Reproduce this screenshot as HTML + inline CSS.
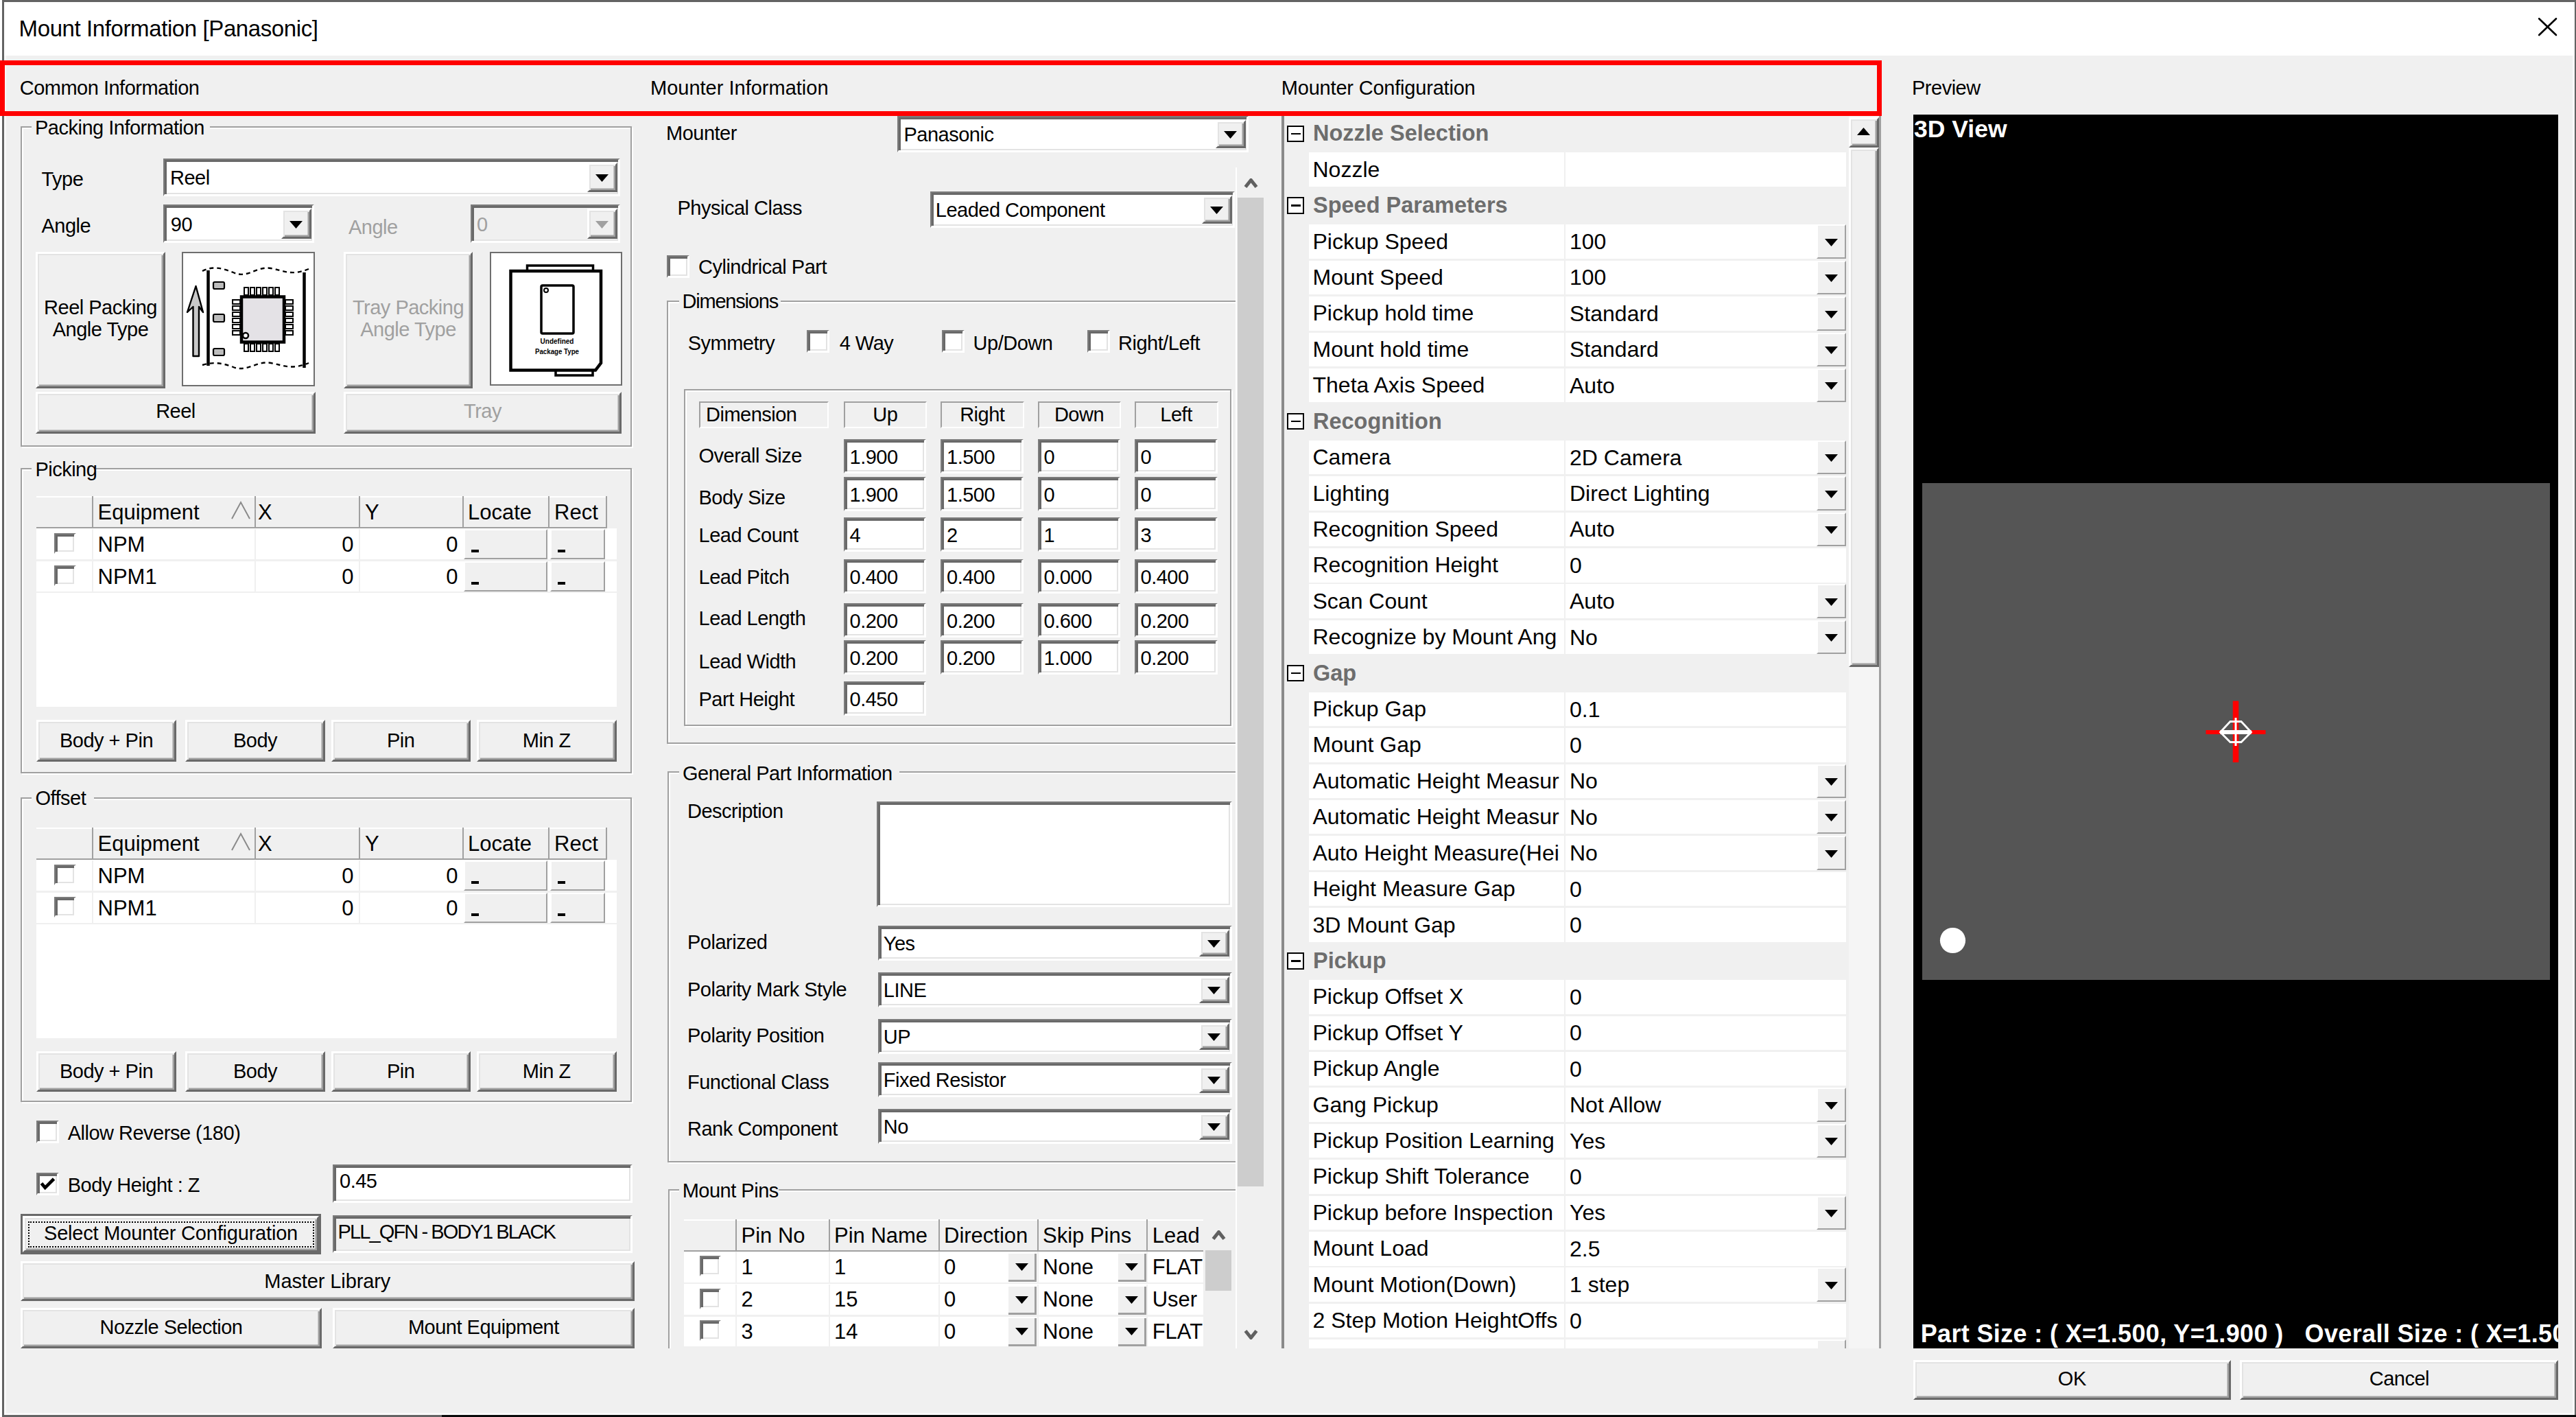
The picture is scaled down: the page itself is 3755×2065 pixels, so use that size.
<!DOCTYPE html><html><head><meta charset="utf-8"><title>Mount Information</title><style>*{margin:0;padding:0}
html,body{width:3755px;height:2065px;overflow:hidden;background:#f0f0f0;position:relative}
body div,body svg{position:absolute}
.t{white-space:nowrap;font-family:'Liberation Sans',sans-serif;color:#000}
.s{}
</style></head><body><div style="left:0px;top:0px;width:3755px;height:2065px;background:#f0f0f0"></div>
<div style="left:0px;top:0px;width:3px;height:2065px;background:#ffffff"></div>
<div style="left:3px;top:0px;width:3752px;height:2.5px;background:#636363"></div>
<div style="left:3px;top:0px;width:2.5px;height:2065px;background:#636363"></div>
<div style="left:3752.5px;top:0px;width:2.5px;height:2065px;background:#636363"></div>
<div style="left:3px;top:2062px;width:641px;height:3px;background:#636363"></div>
<div style="left:644px;top:2062px;width:3111px;height:3px;background:#0a0a0a"></div>
<div style="left:5.5px;top:81px;width:3.5px;height:1981px;background:#f9f9f9"></div>
<div style="left:5.5px;top:2059px;width:3747px;height:3px;background:#f9f9f9"></div>
<div style="left:3749.5px;top:81px;width:3px;height:1981px;background:#f9f9f9"></div>
<div style="left:5.5px;top:2.5px;width:3747px;height:78.5px;background:#ffffff"></div>
<div class="t" style="left:27.6px;top:24.75px;font-size:33px;line-height:33px;letter-spacing:-0.4px;">Mount Information [Panasonic]</div>
<svg style="left:3695px;top:22px" width="36" height="34" viewBox="0 0 36 34"><path d="M6.2,5.2 L31,29 M31,5.2 L6.2,29" stroke="#000" stroke-width="2.6" stroke-linecap="round"/></svg>
<div class="t s" style="left:28.7px;top:113.55px;font-size:29px;line-height:29px;letter-spacing:-0.5px;">Common Information</div>
<div class="t s" style="left:948px;top:114.35px;font-size:29px;line-height:29px;">Mounter Information</div>
<div class="t s" style="left:1867.8px;top:113.95px;font-size:29px;line-height:29px;letter-spacing:-0.2px;">Mounter Configuration</div>
<div class="t s" style="left:2787px;top:114.35px;font-size:29px;line-height:29px;letter-spacing:-0.5px;">Preview</div>
<div style="left:31.5px;top:186px;width:891.5px;height:467px;border:2px solid #fff;box-sizing:border-box"></div>
<div style="left:29.5px;top:184px;width:891.5px;height:467px;border:2px solid #a0a0a0;box-sizing:border-box"></div>
<div style="left:46px;top:172px;width:260px;height:20px;background:#f0f0f0"></div>
<div class="t s" style="left:51px;top:171.75px;font-size:29px;line-height:29px;letter-spacing:-0.5px;">Packing Information</div>
<div class="t s" style="left:60.5px;top:247.35px;font-size:29px;line-height:29px;letter-spacing:-0.5px;">Type</div>
<div style="left:238px;top:230.5px;width:666px;height:55.5px;background:#fff;border-style:solid;border-width:2px 3px 3px 2px;border-color:#7c7c7c #fff #fff #7c7c7c;box-sizing:border-box;box-shadow:inset 3px 3px 0 #696969, inset -2px -2px 0 #e3e3e3"></div>
<div style="left:855.5px;top:236.8px;width:44px;height:43.5px;background:#f0f0f0;border-style:solid;border-width:3px 3px 3px 3px;border-color:#fff #696969 #696969 #fff;box-sizing:border-box;box-shadow:inset 2px 2px 0 #e3e3e3, inset -2.5px -2.5px 0 #a0a0a0"></div>
<svg style="left:868px;top:254.05px" width="19" height="11" viewBox="0 0 19 11"><polygon points="0,0 19,0 9.5,11" fill="#000"/></svg>
<div class="t s" style="left:248px;top:245.35px;font-size:29px;line-height:29px;letter-spacing:-0.5px;">Reel</div>
<div class="t s" style="left:60.5px;top:315.15px;font-size:29px;line-height:29px;letter-spacing:-0.5px;">Angle</div>
<div style="left:238px;top:298px;width:220px;height:56px;background:#fff;border-style:solid;border-width:2px 3px 3px 2px;border-color:#7c7c7c #fff #fff #7c7c7c;box-sizing:border-box;box-shadow:inset 3px 3px 0 #696969, inset -2px -2px 0 #e3e3e3"></div>
<div style="left:409.5px;top:304.3px;width:44px;height:44px;background:#f0f0f0;border-style:solid;border-width:3px 3px 3px 3px;border-color:#fff #696969 #696969 #fff;box-sizing:border-box;box-shadow:inset 2px 2px 0 #e3e3e3, inset -2.5px -2.5px 0 #a0a0a0"></div>
<svg style="left:422px;top:321.8px" width="19" height="11" viewBox="0 0 19 11"><polygon points="0,0 19,0 9.5,11" fill="#000"/></svg>
<div class="t s" style="left:248.8px;top:313.35px;font-size:29px;line-height:29px;letter-spacing:-0.5px;">90</div>
<div class="t s" style="left:508px;top:317.05px;font-size:29px;line-height:29px;color:#a0a0a0;letter-spacing:-0.5px;">Angle</div>
<div style="left:686px;top:298px;width:218px;height:56px;background:#f0f0f0;border-style:solid;border-width:2px 3px 3px 2px;border-color:#7c7c7c #fff #fff #7c7c7c;box-sizing:border-box;box-shadow:inset 3px 3px 0 #696969, inset -2px -2px 0 #e3e3e3"></div>
<div style="left:855.5px;top:304.3px;width:44px;height:44px;background:#f0f0f0;border-style:solid;border-width:3px 3px 3px 3px;border-color:#fff #696969 #696969 #fff;box-sizing:border-box;box-shadow:inset 2px 2px 0 #e3e3e3, inset -2.5px -2.5px 0 #a0a0a0"></div>
<svg style="left:868px;top:321.8px" width="19" height="11" viewBox="0 0 19 11"><polygon points="0,0 19,0 9.5,11" fill="#a0a0a0"/></svg>
<div class="t s" style="left:695px;top:313.35px;font-size:29px;line-height:29px;color:#a0a0a0;letter-spacing:-0.5px;">0</div>
<div style="left:52px;top:367px;width:189px;height:198.5px;background:#f0f0f0;border-style:solid;border-width:3px 3px 3px 3px;border-color:#fff #696969 #696969 #fff;box-sizing:border-box;box-shadow:inset 2px 2px 0 #e3e3e3, inset -2.5px -2.5px 0 #a0a0a0"></div>
<div class="t s" style="left:52px;top:433.65px;font-size:29px;line-height:29px;letter-spacing:-0.5px;width:189px;text-align:center;">Reel Packing</div>
<div class="t s" style="left:52px;top:466.35px;font-size:29px;line-height:29px;letter-spacing:-0.5px;width:189px;text-align:center;">Angle Type</div>
<div style="left:265px;top:367px;width:194px;height:195.5px;background:#fff;border:2.5px solid #6e6e6e;box-sizing:border-box"></div>
<svg style="left:265px;top:367px" width="194" height="196" viewBox="0 0 194 196">
<g stroke="#000" fill="none">
<path d="M16.5,152 L16.5,80 L8,88 L20.5,50 L31,88 L25,80 L25,152 Z" fill="#c8c8c8" stroke-width="2.4" stroke-linejoin="round"/>
<path d="M38.5,27 L38.5,166" stroke-width="4.5"/>
<path d="M178.5,30 L178.5,169" stroke-width="4.5"/>
<path d="M30,28 C45,20 60,24 75,30 C95,40 110,20 130,24 C150,28 160,35 185,25" stroke-width="2.4" stroke-dasharray="6,5"/>
<path d="M30,165 C45,160 60,162 75,168 C95,176 110,158 130,162 C150,166 160,172 185,162" stroke-width="2.4" stroke-dasharray="6,5"/>
<rect x="46" y="44" width="16" height="10" rx="2" fill="#bdbdbd" stroke-width="2.2"/>
<rect x="46" y="91" width="16" height="11" rx="2" fill="#bdbdbd" stroke-width="2.2"/>
<rect x="46" y="141" width="16" height="10" rx="2" fill="#bdbdbd" stroke-width="2.2"/>
<rect x="87" y="65.5" width="62" height="66" fill="#e4e2e6" stroke-width="4.5"/>
</g>
<g fill="#fff" stroke="#000" stroke-width="2">
<rect x="91" y="52" width="6" height="11"/><rect x="100" y="52" width="6" height="11"/><rect x="109" y="52" width="6" height="11"/><rect x="118" y="52" width="6" height="11"/><rect x="127" y="52" width="6" height="11"/><rect x="136" y="52" width="6" height="11"/>
<rect x="91" y="134" width="6" height="11"/><rect x="100" y="134" width="6" height="11"/><rect x="109" y="134" width="6" height="11"/><rect x="118" y="134" width="6" height="11"/><rect x="127" y="134" width="6" height="11"/><rect x="136" y="134" width="6" height="11"/>
<rect x="74" y="70" width="11" height="6"/><rect x="74" y="79" width="11" height="6"/><rect x="74" y="88" width="11" height="6"/><rect x="74" y="97" width="11" height="6"/><rect x="74" y="106" width="11" height="6"/><rect x="74" y="115" width="11" height="6"/>
<rect x="151" y="70" width="11" height="6"/><rect x="151" y="79" width="11" height="6"/><rect x="151" y="88" width="11" height="6"/><rect x="151" y="97" width="11" height="6"/><rect x="151" y="106" width="11" height="6"/><rect x="151" y="115" width="11" height="6"/>
<circle cx="93" cy="122" r="4" stroke-width="2.5"/>
</g></svg>
<div style="left:501px;top:367px;width:188px;height:198.5px;background:#f0f0f0;border-style:solid;border-width:3px 3px 3px 3px;border-color:#fff #696969 #696969 #fff;box-sizing:border-box;box-shadow:inset 2px 2px 0 #e3e3e3, inset -2.5px -2.5px 0 #a0a0a0"></div>
<div class="t s" style="left:501px;top:433.65px;font-size:29px;line-height:29px;color:#a0a0a0;letter-spacing:-0.5px;width:188px;text-align:center;">Tray Packing</div>
<div class="t s" style="left:501px;top:466.35px;font-size:29px;line-height:29px;color:#a0a0a0;letter-spacing:-0.5px;width:188px;text-align:center;">Angle Type</div>
<div style="left:713.5px;top:367px;width:193px;height:195px;background:#fff;border:2.5px solid #6e6e6e;box-sizing:border-box"></div>
<svg style="left:713.5px;top:367px" width="193" height="195" viewBox="0 0 193 195">
<g stroke="#000" fill="#fff">
<rect x="54.5" y="20" width="96" height="8" stroke-width="3.5"/>
<rect x="96" y="172" width="54" height="8" stroke-width="3.5"/>
<path d="M30.5,28 L162,28 L162,162 L154,172.5 L30.5,172.5 Z" stroke-width="4.5"/>
<rect x="75" y="49" width="47" height="70" rx="2" stroke-width="3.5"/>
<circle cx="82" cy="56" r="3" stroke-width="2"/>
</g>
<text x="98" y="134" font-family="Liberation Sans" font-weight="bold" font-size="10" text-anchor="middle" fill="#000">Undefined</text>
<text x="98" y="149" font-family="Liberation Sans" font-weight="bold" font-size="10" text-anchor="middle" fill="#000" textLength="64" lengthAdjust="spacingAndGlyphs">Package Type</text>
</svg>
<div style="left:52px;top:571.3px;width:408px;height:60.4px;background:#f0f0f0;border-style:solid;border-width:3px 3px 3px 3px;border-color:#fff #696969 #696969 #fff;box-sizing:border-box;box-shadow:inset 2px 2px 0 #e3e3e3, inset -2.5px -2.5px 0 #a0a0a0"></div>
<div class="t s" style="left:52px;top:584.85px;font-size:29px;line-height:29px;letter-spacing:-0.5px;width:408px;text-align:center;">Reel</div>
<div style="left:501px;top:571.3px;width:405px;height:60.4px;background:#f0f0f0;border-style:solid;border-width:3px 3px 3px 3px;border-color:#fff #696969 #696969 #fff;box-sizing:border-box;box-shadow:inset 2px 2px 0 #e3e3e3, inset -2.5px -2.5px 0 #a0a0a0"></div>
<div class="t s" style="left:501px;top:584.85px;font-size:29px;line-height:29px;color:#a0a0a0;letter-spacing:-0.5px;width:405px;text-align:center;">Tray</div>
<div style="left:31.5px;top:683.5px;width:891.5px;height:445.5px;border:2px solid #fff;box-sizing:border-box"></div>
<div style="left:29.5px;top:681.5px;width:891.5px;height:445.5px;border:2px solid #a0a0a0;box-sizing:border-box"></div>
<div style="left:46.4px;top:669.5px;width:94px;height:20px;background:#f0f0f0"></div>
<div class="t s" style="left:51.4px;top:669.95px;font-size:29px;line-height:29px;letter-spacing:-0.5px;">Picking</div>
<div style="left:53px;top:770px;width:846px;height:259.5px;background:#fff"></div>
<div style="left:53px;top:723px;width:832px;height:47px;background:#f0f0f0"></div>
<div style="left:53px;top:723px;width:832px;height:2px;background:#ffffff"></div>
<div style="left:53px;top:767.5px;width:832px;height:2.5px;background:#a0a0a0"></div>
<div style="left:134px;top:723px;width:2px;height:47px;background:#a0a0a0"></div>
<div style="left:370.5px;top:723px;width:2px;height:47px;background:#a0a0a0"></div>
<div style="left:522.5px;top:723px;width:2px;height:47px;background:#a0a0a0"></div>
<div style="left:674px;top:723px;width:2px;height:47px;background:#a0a0a0"></div>
<div style="left:799px;top:723px;width:2px;height:47px;background:#a0a0a0"></div>
<div style="left:883px;top:723px;width:2px;height:47px;background:#a0a0a0"></div>
<div class="t" style="left:142.5px;top:730.65px;font-size:31px;line-height:31px;">Equipment</div>
<svg style="left:336px;top:729px" width="30" height="30" viewBox="0 0 30 30"><path d="M2,27 L15,3 L28,27" fill="none" stroke="#8a8a8a" stroke-width="2"/></svg>
<div class="t" style="left:376px;top:730.65px;font-size:31px;line-height:31px;">X</div>
<div class="t" style="left:532px;top:730.65px;font-size:31px;line-height:31px;">Y</div>
<div class="t" style="left:682px;top:730.65px;font-size:31px;line-height:31px;">Locate</div>
<div class="t" style="left:808px;top:730.65px;font-size:31px;line-height:31px;">Rect</div>
<div style="left:53px;top:815px;width:846px;height:2.5px;background:#f0f0f0"></div>
<div style="left:134px;top:771px;width:2px;height:44px;background:#f0f0f0"></div>
<div style="left:370.5px;top:771px;width:2px;height:44px;background:#f0f0f0"></div>
<div style="left:522.5px;top:771px;width:2px;height:44px;background:#f0f0f0"></div>
<div style="left:79px;top:777px;width:32px;height:30px;background:#fff;border-style:solid;border-width:2px 3px 3px 2px;border-color:#7c7c7c #fff #fff #7c7c7c;box-sizing:border-box;box-shadow:inset 3px 3px 0 #696969, inset -2px -2px 0 #e3e3e3"></div>
<div class="t" style="left:142.5px;top:777.65px;font-size:31px;line-height:31px;">NPM</div>
<div class="t" style="left:360px;top:777.65px;font-size:31px;line-height:31px;width:155.5px;text-align:right;">0</div>
<div class="t" style="left:512px;top:777.65px;font-size:31px;line-height:31px;width:155.5px;text-align:right;">0</div>
<div style="left:676.3px;top:771px;width:122.2px;height:44px;background:#f0f0f0;border-style:solid;border-width:2px 2.5px 2.5px 2px;border-color:#fff #a0a0a0 #a0a0a0 #fff;box-sizing:border-box"></div>
<div style="left:687.3px;top:801px;width:11px;height:4px;background:#000"></div>
<div style="left:802px;top:771px;width:80.4px;height:44px;background:#f0f0f0;border-style:solid;border-width:2px 2.5px 2.5px 2px;border-color:#fff #a0a0a0 #a0a0a0 #fff;box-sizing:border-box"></div>
<div style="left:813px;top:801px;width:11px;height:4px;background:#000"></div>
<div style="left:53px;top:861.5px;width:846px;height:2.5px;background:#f0f0f0"></div>
<div style="left:134px;top:818px;width:2px;height:43.5px;background:#f0f0f0"></div>
<div style="left:370.5px;top:818px;width:2px;height:43.5px;background:#f0f0f0"></div>
<div style="left:522.5px;top:818px;width:2px;height:43.5px;background:#f0f0f0"></div>
<div style="left:79px;top:824px;width:32px;height:30px;background:#fff;border-style:solid;border-width:2px 3px 3px 2px;border-color:#7c7c7c #fff #fff #7c7c7c;box-sizing:border-box;box-shadow:inset 3px 3px 0 #696969, inset -2px -2px 0 #e3e3e3"></div>
<div class="t" style="left:142.5px;top:824.65px;font-size:31px;line-height:31px;">NPM1</div>
<div class="t" style="left:360px;top:824.65px;font-size:31px;line-height:31px;width:155.5px;text-align:right;">0</div>
<div class="t" style="left:512px;top:824.65px;font-size:31px;line-height:31px;width:155.5px;text-align:right;">0</div>
<div style="left:676.3px;top:818px;width:122.2px;height:43.5px;background:#f0f0f0;border-style:solid;border-width:2px 2.5px 2.5px 2px;border-color:#fff #a0a0a0 #a0a0a0 #fff;box-sizing:border-box"></div>
<div style="left:687.3px;top:848px;width:11px;height:4px;background:#000"></div>
<div style="left:802px;top:818px;width:80.4px;height:43.5px;background:#f0f0f0;border-style:solid;border-width:2px 2.5px 2.5px 2px;border-color:#fff #a0a0a0 #a0a0a0 #fff;box-sizing:border-box"></div>
<div style="left:813px;top:848px;width:11px;height:4px;background:#000"></div>
<div style="left:53px;top:1049px;width:204px;height:61px;background:#f0f0f0;border-style:solid;border-width:3px 3px 3px 3px;border-color:#fff #696969 #696969 #fff;box-sizing:border-box;box-shadow:inset 2px 2px 0 #e3e3e3, inset -2.5px -2.5px 0 #a0a0a0"></div>
<div class="t s" style="left:53px;top:1064.65px;font-size:29px;line-height:29px;letter-spacing:-0.5px;width:204px;text-align:center;">Body + Pin</div>
<div style="left:270px;top:1049px;width:204px;height:61px;background:#f0f0f0;border-style:solid;border-width:3px 3px 3px 3px;border-color:#fff #696969 #696969 #fff;box-sizing:border-box;box-shadow:inset 2px 2px 0 #e3e3e3, inset -2.5px -2.5px 0 #a0a0a0"></div>
<div class="t s" style="left:270px;top:1064.65px;font-size:29px;line-height:29px;letter-spacing:-0.5px;width:204px;text-align:center;">Body</div>
<div style="left:482.5px;top:1049px;width:203.5px;height:61px;background:#f0f0f0;border-style:solid;border-width:3px 3px 3px 3px;border-color:#fff #696969 #696969 #fff;box-sizing:border-box;box-shadow:inset 2px 2px 0 #e3e3e3, inset -2.5px -2.5px 0 #a0a0a0"></div>
<div class="t s" style="left:482.5px;top:1064.65px;font-size:29px;line-height:29px;letter-spacing:-0.5px;width:203.5px;text-align:center;">Pin</div>
<div style="left:694.5px;top:1049px;width:204.5px;height:61px;background:#f0f0f0;border-style:solid;border-width:3px 3px 3px 3px;border-color:#fff #696969 #696969 #fff;box-sizing:border-box;box-shadow:inset 2px 2px 0 #e3e3e3, inset -2.5px -2.5px 0 #a0a0a0"></div>
<div class="t s" style="left:694.5px;top:1064.65px;font-size:29px;line-height:29px;letter-spacing:-0.5px;width:204.5px;text-align:center;">Min Z</div>
<div style="left:31.5px;top:1163.5px;width:891.5px;height:444.5px;border:2px solid #fff;box-sizing:border-box"></div>
<div style="left:29.5px;top:1161.5px;width:891.5px;height:444.5px;border:2px solid #a0a0a0;box-sizing:border-box"></div>
<div style="left:46.4px;top:1149.5px;width:91px;height:20px;background:#f0f0f0"></div>
<div class="t s" style="left:51.4px;top:1149.05px;font-size:29px;line-height:29px;letter-spacing:-0.5px;">Offset</div>
<div style="left:53px;top:1253px;width:846px;height:259.5px;background:#fff"></div>
<div style="left:53px;top:1206px;width:832px;height:47px;background:#f0f0f0"></div>
<div style="left:53px;top:1206px;width:832px;height:2px;background:#ffffff"></div>
<div style="left:53px;top:1250.5px;width:832px;height:2.5px;background:#a0a0a0"></div>
<div style="left:134px;top:1206px;width:2px;height:47px;background:#a0a0a0"></div>
<div style="left:370.5px;top:1206px;width:2px;height:47px;background:#a0a0a0"></div>
<div style="left:522.5px;top:1206px;width:2px;height:47px;background:#a0a0a0"></div>
<div style="left:674px;top:1206px;width:2px;height:47px;background:#a0a0a0"></div>
<div style="left:799px;top:1206px;width:2px;height:47px;background:#a0a0a0"></div>
<div style="left:883px;top:1206px;width:2px;height:47px;background:#a0a0a0"></div>
<div class="t" style="left:142.5px;top:1213.65px;font-size:31px;line-height:31px;">Equipment</div>
<svg style="left:336px;top:1212px" width="30" height="30" viewBox="0 0 30 30"><path d="M2,27 L15,3 L28,27" fill="none" stroke="#8a8a8a" stroke-width="2"/></svg>
<div class="t" style="left:376px;top:1213.65px;font-size:31px;line-height:31px;">X</div>
<div class="t" style="left:532px;top:1213.65px;font-size:31px;line-height:31px;">Y</div>
<div class="t" style="left:682px;top:1213.65px;font-size:31px;line-height:31px;">Locate</div>
<div class="t" style="left:808px;top:1213.65px;font-size:31px;line-height:31px;">Rect</div>
<div style="left:53px;top:1298px;width:846px;height:2.5px;background:#f0f0f0"></div>
<div style="left:134px;top:1254px;width:2px;height:44px;background:#f0f0f0"></div>
<div style="left:370.5px;top:1254px;width:2px;height:44px;background:#f0f0f0"></div>
<div style="left:522.5px;top:1254px;width:2px;height:44px;background:#f0f0f0"></div>
<div style="left:79px;top:1260px;width:32px;height:30px;background:#fff;border-style:solid;border-width:2px 3px 3px 2px;border-color:#7c7c7c #fff #fff #7c7c7c;box-sizing:border-box;box-shadow:inset 3px 3px 0 #696969, inset -2px -2px 0 #e3e3e3"></div>
<div class="t" style="left:142.5px;top:1260.65px;font-size:31px;line-height:31px;">NPM</div>
<div class="t" style="left:360px;top:1260.65px;font-size:31px;line-height:31px;width:155.5px;text-align:right;">0</div>
<div class="t" style="left:512px;top:1260.65px;font-size:31px;line-height:31px;width:155.5px;text-align:right;">0</div>
<div style="left:676.3px;top:1254px;width:122.2px;height:44px;background:#f0f0f0;border-style:solid;border-width:2px 2.5px 2.5px 2px;border-color:#fff #a0a0a0 #a0a0a0 #fff;box-sizing:border-box"></div>
<div style="left:687.3px;top:1284px;width:11px;height:4px;background:#000"></div>
<div style="left:802px;top:1254px;width:80.4px;height:44px;background:#f0f0f0;border-style:solid;border-width:2px 2.5px 2.5px 2px;border-color:#fff #a0a0a0 #a0a0a0 #fff;box-sizing:border-box"></div>
<div style="left:813px;top:1284px;width:11px;height:4px;background:#000"></div>
<div style="left:53px;top:1344.5px;width:846px;height:2.5px;background:#f0f0f0"></div>
<div style="left:134px;top:1301px;width:2px;height:43.5px;background:#f0f0f0"></div>
<div style="left:370.5px;top:1301px;width:2px;height:43.5px;background:#f0f0f0"></div>
<div style="left:522.5px;top:1301px;width:2px;height:43.5px;background:#f0f0f0"></div>
<div style="left:79px;top:1307px;width:32px;height:30px;background:#fff;border-style:solid;border-width:2px 3px 3px 2px;border-color:#7c7c7c #fff #fff #7c7c7c;box-sizing:border-box;box-shadow:inset 3px 3px 0 #696969, inset -2px -2px 0 #e3e3e3"></div>
<div class="t" style="left:142.5px;top:1307.65px;font-size:31px;line-height:31px;">NPM1</div>
<div class="t" style="left:360px;top:1307.65px;font-size:31px;line-height:31px;width:155.5px;text-align:right;">0</div>
<div class="t" style="left:512px;top:1307.65px;font-size:31px;line-height:31px;width:155.5px;text-align:right;">0</div>
<div style="left:676.3px;top:1301px;width:122.2px;height:43.5px;background:#f0f0f0;border-style:solid;border-width:2px 2.5px 2.5px 2px;border-color:#fff #a0a0a0 #a0a0a0 #fff;box-sizing:border-box"></div>
<div style="left:687.3px;top:1331px;width:11px;height:4px;background:#000"></div>
<div style="left:802px;top:1301px;width:80.4px;height:43.5px;background:#f0f0f0;border-style:solid;border-width:2px 2.5px 2.5px 2px;border-color:#fff #a0a0a0 #a0a0a0 #fff;box-sizing:border-box"></div>
<div style="left:813px;top:1331px;width:11px;height:4px;background:#000"></div>
<div style="left:53px;top:1531.7px;width:204px;height:59.7px;background:#f0f0f0;border-style:solid;border-width:3px 3px 3px 3px;border-color:#fff #696969 #696969 #fff;box-sizing:border-box;box-shadow:inset 2px 2px 0 #e3e3e3, inset -2.5px -2.5px 0 #a0a0a0"></div>
<div class="t s" style="left:53px;top:1547.35px;font-size:29px;line-height:29px;letter-spacing:-0.5px;width:204px;text-align:center;">Body + Pin</div>
<div style="left:270px;top:1531.7px;width:204px;height:59.7px;background:#f0f0f0;border-style:solid;border-width:3px 3px 3px 3px;border-color:#fff #696969 #696969 #fff;box-sizing:border-box;box-shadow:inset 2px 2px 0 #e3e3e3, inset -2.5px -2.5px 0 #a0a0a0"></div>
<div class="t s" style="left:270px;top:1547.35px;font-size:29px;line-height:29px;letter-spacing:-0.5px;width:204px;text-align:center;">Body</div>
<div style="left:482.5px;top:1531.7px;width:203.5px;height:59.7px;background:#f0f0f0;border-style:solid;border-width:3px 3px 3px 3px;border-color:#fff #696969 #696969 #fff;box-sizing:border-box;box-shadow:inset 2px 2px 0 #e3e3e3, inset -2.5px -2.5px 0 #a0a0a0"></div>
<div class="t s" style="left:482.5px;top:1547.35px;font-size:29px;line-height:29px;letter-spacing:-0.5px;width:203.5px;text-align:center;">Pin</div>
<div style="left:694.5px;top:1531.7px;width:204.5px;height:59.7px;background:#f0f0f0;border-style:solid;border-width:3px 3px 3px 3px;border-color:#fff #696969 #696969 #fff;box-sizing:border-box;box-shadow:inset 2px 2px 0 #e3e3e3, inset -2.5px -2.5px 0 #a0a0a0"></div>
<div class="t s" style="left:694.5px;top:1547.35px;font-size:29px;line-height:29px;letter-spacing:-0.5px;width:204.5px;text-align:center;">Min Z</div>
<div style="left:53px;top:1633px;width:33px;height:33px;background:#fff;border-style:solid;border-width:2px 3px 3px 2px;border-color:#7c7c7c #fff #fff #7c7c7c;box-sizing:border-box;box-shadow:inset 3px 3px 0 #696969, inset -2px -2px 0 #e3e3e3"></div>
<div class="t s" style="left:98.7px;top:1637.35px;font-size:29px;line-height:29px;letter-spacing:-0.5px;">Allow Reverse (180)</div>
<div style="left:53px;top:1709px;width:33px;height:33px;background:#fff;border-style:solid;border-width:2px 3px 3px 2px;border-color:#7c7c7c #fff #fff #7c7c7c;box-sizing:border-box;box-shadow:inset 3px 3px 0 #696969, inset -2px -2px 0 #e3e3e3"></div>
<svg style="left:53px;top:1709px" width="33" height="33" viewBox="0 0 31 30"><polyline points="7,14 12,20 24,8" fill="none" stroke="#000" stroke-width="4.5"/></svg>
<div class="t s" style="left:98.7px;top:1713.35px;font-size:29px;line-height:29px;letter-spacing:-0.5px;">Body Height : Z</div>
<div style="left:485px;top:1697px;width:437px;height:56px;background:#fff;border-style:solid;border-width:2px 3px 3px 2px;border-color:#7c7c7c #fff #fff #7c7c7c;box-sizing:border-box;box-shadow:inset 3px 3px 0 #696969, inset -2px -2px 0 #e3e3e3"></div>
<div class="t s" style="left:495px;top:1707.35px;font-size:29px;line-height:29px;letter-spacing:-0.5px;">0.45</div>
<div style="left:29.6px;top:1769px;width:438.4px;height:59.3px;border:3px solid #696969;box-sizing:border-box"></div>
<div style="left:32.6px;top:1772px;width:432.4px;height:53.3px;background:#f0f0f0;border-style:solid;border-width:3px 3px 3px 3px;border-color:#fff #696969 #696969 #fff;box-sizing:border-box;box-shadow:inset 2px 2px 0 #e3e3e3, inset -2.5px -2.5px 0 #a0a0a0"></div>
<div style="left:41px;top:1780.3px;width:417px;height:37.3px;border:2.2px dotted #000;box-sizing:border-box"></div>
<div class="t s" style="left:30px;top:1783.15px;font-size:29px;line-height:29px;letter-spacing:-0.2px;width:438px;text-align:center;">Select Mounter Configuration</div>
<div style="left:485px;top:1770.5px;width:437px;height:55.5px;background:#f0f0f0;border-style:solid;border-width:2px 3px 3px 2px;border-color:#7c7c7c #fff #fff #7c7c7c;box-sizing:border-box;box-shadow:inset 3px 3px 0 #696969, inset -2px -2px 0 #e3e3e3"></div>
<div class="t s" style="left:492.6px;top:1780.75px;font-size:29px;line-height:29px;letter-spacing:-1.9px;">PLL_QFN - BODY1 BLACK</div>
<div style="left:30px;top:1837.7px;width:894.6px;height:58.3px;background:#f0f0f0;border-style:solid;border-width:3px 3px 3px 3px;border-color:#fff #696969 #696969 #fff;box-sizing:border-box;box-shadow:inset 2px 2px 0 #e3e3e3, inset -2.5px -2.5px 0 #a0a0a0"></div>
<div class="t s" style="left:30px;top:1852.85px;font-size:29px;line-height:29px;letter-spacing:-0.1px;width:894.6px;text-align:center;">Master Library</div>
<div style="left:30px;top:1906px;width:439px;height:58.6px;background:#f0f0f0;border-style:solid;border-width:3px 3px 3px 3px;border-color:#fff #696969 #696969 #fff;box-sizing:border-box;box-shadow:inset 2px 2px 0 #e3e3e3, inset -2.5px -2.5px 0 #a0a0a0"></div>
<div class="t s" style="left:30px;top:1920.05px;font-size:29px;line-height:29px;letter-spacing:-0.5px;width:439px;text-align:center;">Nozzle Selection</div>
<div style="left:485px;top:1906px;width:439.6px;height:58.6px;background:#f0f0f0;border-style:solid;border-width:3px 3px 3px 3px;border-color:#fff #696969 #696969 #fff;box-sizing:border-box;box-shadow:inset 2px 2px 0 #e3e3e3, inset -2.5px -2.5px 0 #a0a0a0"></div>
<div class="t s" style="left:485px;top:1920.05px;font-size:29px;line-height:29px;letter-spacing:-0.5px;width:439.6px;text-align:center;">Mount Equipment</div>
<div class="t s" style="left:971px;top:179.95px;font-size:29px;line-height:29px;letter-spacing:-0.5px;">Mounter</div>
<div style="left:1308px;top:169px;width:512px;height:53px;background:#fff;border-style:solid;border-width:2px 3px 3px 2px;border-color:#7c7c7c #fff #fff #7c7c7c;box-sizing:border-box;box-shadow:inset 3px 3px 0 #696969, inset -2px -2px 0 #e3e3e3"></div>
<div style="left:1771.5px;top:175.3px;width:44px;height:41px;background:#f0f0f0;border-style:solid;border-width:3px 3px 3px 3px;border-color:#fff #696969 #696969 #fff;box-sizing:border-box;box-shadow:inset 2px 2px 0 #e3e3e3, inset -2.5px -2.5px 0 #a0a0a0"></div>
<svg style="left:1784px;top:191.3px" width="19" height="11" viewBox="0 0 19 11"><polygon points="0,0 19,0 9.5,11" fill="#000"/></svg>
<div class="t s" style="left:1317.5px;top:182.35px;font-size:29px;line-height:29px;letter-spacing:-0.5px;">Panasonic</div>
<div style="left:930px;top:243px;width:870.5px;height:1722px;overflow:hidden">
<div style="left:-930px;top:-243px;width:3755px;height:2065px">
<div class="t s" style="left:987.5px;top:289.35px;font-size:29px;line-height:29px;letter-spacing:-0.5px;">Physical Class</div>
<div style="left:1356px;top:279px;width:444px;height:53px;background:#fff;border-style:solid;border-width:2px 3px 3px 2px;border-color:#7c7c7c #fff #fff #7c7c7c;box-sizing:border-box;box-shadow:inset 3px 3px 0 #696969, inset -2px -2px 0 #e3e3e3"></div>
<div style="left:1751.5px;top:285.3px;width:44px;height:41px;background:#f0f0f0;border-style:solid;border-width:3px 3px 3px 3px;border-color:#fff #696969 #696969 #fff;box-sizing:border-box;box-shadow:inset 2px 2px 0 #e3e3e3, inset -2.5px -2.5px 0 #a0a0a0"></div>
<svg style="left:1764px;top:301.3px" width="19" height="11" viewBox="0 0 19 11"><polygon points="0,0 19,0 9.5,11" fill="#000"/></svg>
<div class="t s" style="left:1363.8px;top:292.15px;font-size:29px;line-height:29px;letter-spacing:-0.5px;">Leaded Component</div>
<div style="left:972.3px;top:372.3px;width:32.7px;height:33px;background:#fff;border-style:solid;border-width:2px 3px 3px 2px;border-color:#7c7c7c #fff #fff #7c7c7c;box-sizing:border-box;box-shadow:inset 3px 3px 0 #696969, inset -2px -2px 0 #e3e3e3"></div>
<div class="t s" style="left:1018px;top:375.35px;font-size:29px;line-height:29px;letter-spacing:-0.5px;">Cylindrical Part</div>
<div style="left:974.3px;top:439.5px;width:875.7px;height:646.5px;border:2px solid #fff;box-sizing:border-box"></div>
<div style="left:972.3px;top:437.5px;width:875.7px;height:646.5px;border:2px solid #a0a0a0;box-sizing:border-box"></div>
<div style="left:989.5px;top:425.5px;width:148px;height:20px;background:#f0f0f0"></div>
<div class="t s" style="left:994.5px;top:425.35px;font-size:29px;line-height:29px;letter-spacing:-1.2px;">Dimensions</div>
<div class="t s" style="left:1002.7px;top:486.35px;font-size:29px;line-height:29px;letter-spacing:-0.5px;">Symmetry</div>
<div style="left:1175.5px;top:481px;width:33px;height:33px;background:#fff;border-style:solid;border-width:2px 3px 3px 2px;border-color:#7c7c7c #fff #fff #7c7c7c;box-sizing:border-box;box-shadow:inset 3px 3px 0 #696969, inset -2px -2px 0 #e3e3e3"></div>
<div class="t s" style="left:1223.7px;top:486.35px;font-size:29px;line-height:29px;letter-spacing:-0.5px;">4 Way</div>
<div style="left:1372.5px;top:481px;width:33px;height:33px;background:#fff;border-style:solid;border-width:2px 3px 3px 2px;border-color:#7c7c7c #fff #fff #7c7c7c;box-sizing:border-box;box-shadow:inset 3px 3px 0 #696969, inset -2px -2px 0 #e3e3e3"></div>
<div class="t s" style="left:1418.6px;top:486.35px;font-size:29px;line-height:29px;letter-spacing:-0.5px;">Up/Down</div>
<div style="left:1584.5px;top:481px;width:33px;height:33px;background:#fff;border-style:solid;border-width:2px 3px 3px 2px;border-color:#7c7c7c #fff #fff #7c7c7c;box-sizing:border-box;box-shadow:inset 3px 3px 0 #696969, inset -2px -2px 0 #e3e3e3"></div>
<div class="t s" style="left:1630px;top:486.35px;font-size:29px;line-height:29px;letter-spacing:-0.5px;">Right/Left</div>
<div style="left:998.5px;top:568.5px;width:798px;height:491.5px;border:2px solid #fff;box-sizing:border-box"></div>
<div style="left:996.5px;top:566.5px;width:798px;height:491.5px;border:2px solid #a0a0a0;box-sizing:border-box"></div>
<div style="left:1019px;top:584.7px;width:188.5px;height:39.3px;border-style:solid;border-width:2.5px 2px 2px 2.5px;border-color:#a0a0a0 #fff #fff #a0a0a0;box-sizing:border-box"></div>
<div class="t s" style="left:1029px;top:590.35px;font-size:29px;line-height:29px;letter-spacing:-0.5px;">Dimension</div>
<div style="left:1229.5px;top:584.7px;width:121.5px;height:39.3px;border-style:solid;border-width:2.5px 2px 2px 2.5px;border-color:#a0a0a0 #fff #fff #a0a0a0;box-sizing:border-box"></div>
<div class="t s" style="left:1229.5px;top:590.35px;font-size:29px;line-height:29px;letter-spacing:-0.5px;width:121.5px;text-align:center;">Up</div>
<div style="left:1371px;top:584.7px;width:121.5px;height:39.3px;border-style:solid;border-width:2.5px 2px 2px 2.5px;border-color:#a0a0a0 #fff #fff #a0a0a0;box-sizing:border-box"></div>
<div class="t s" style="left:1371px;top:590.35px;font-size:29px;line-height:29px;letter-spacing:-0.5px;width:121.5px;text-align:center;">Right</div>
<div style="left:1512.5px;top:584.7px;width:121px;height:39.3px;border-style:solid;border-width:2.5px 2px 2px 2.5px;border-color:#a0a0a0 #fff #fff #a0a0a0;box-sizing:border-box"></div>
<div class="t s" style="left:1512.5px;top:590.35px;font-size:29px;line-height:29px;letter-spacing:-0.5px;width:121px;text-align:center;">Down</div>
<div style="left:1653.5px;top:584.7px;width:122px;height:39.3px;border-style:solid;border-width:2.5px 2px 2px 2.5px;border-color:#a0a0a0 #fff #fff #a0a0a0;box-sizing:border-box"></div>
<div class="t s" style="left:1653.5px;top:590.35px;font-size:29px;line-height:29px;letter-spacing:-0.5px;width:122px;text-align:center;">Left</div>
<div class="t s" style="left:1018.5px;top:649.75px;font-size:29px;line-height:29px;letter-spacing:-0.5px;">Overall Size</div>
<div style="left:1229.5px;top:639.5px;width:120.5px;height:50px;background:#fff;border-style:solid;border-width:2px 3px 3px 2px;border-color:#7c7c7c #fff #fff #7c7c7c;box-sizing:border-box;box-shadow:inset 3px 3px 0 #696969, inset -2px -2px 0 #e3e3e3"></div>
<div class="t s" style="left:1238.5px;top:651.85px;font-size:29px;line-height:29px;letter-spacing:-0.5px;">1.900</div>
<div style="left:1371px;top:639.5px;width:120.5px;height:50px;background:#fff;border-style:solid;border-width:2px 3px 3px 2px;border-color:#7c7c7c #fff #fff #7c7c7c;box-sizing:border-box;box-shadow:inset 3px 3px 0 #696969, inset -2px -2px 0 #e3e3e3"></div>
<div class="t s" style="left:1380px;top:651.85px;font-size:29px;line-height:29px;letter-spacing:-0.5px;">1.500</div>
<div style="left:1512.5px;top:639.5px;width:120px;height:50px;background:#fff;border-style:solid;border-width:2px 3px 3px 2px;border-color:#7c7c7c #fff #fff #7c7c7c;box-sizing:border-box;box-shadow:inset 3px 3px 0 #696969, inset -2px -2px 0 #e3e3e3"></div>
<div class="t s" style="left:1521.5px;top:651.85px;font-size:29px;line-height:29px;letter-spacing:-0.5px;">0</div>
<div style="left:1653.5px;top:639.5px;width:121px;height:50px;background:#fff;border-style:solid;border-width:2px 3px 3px 2px;border-color:#7c7c7c #fff #fff #7c7c7c;box-sizing:border-box;box-shadow:inset 3px 3px 0 #696969, inset -2px -2px 0 #e3e3e3"></div>
<div class="t s" style="left:1662.5px;top:651.85px;font-size:29px;line-height:29px;letter-spacing:-0.5px;">0</div>
<div class="t s" style="left:1018.5px;top:710.95px;font-size:29px;line-height:29px;letter-spacing:-0.5px;">Body Size</div>
<div style="left:1229.5px;top:694.5px;width:120.5px;height:50px;background:#fff;border-style:solid;border-width:2px 3px 3px 2px;border-color:#7c7c7c #fff #fff #7c7c7c;box-sizing:border-box;box-shadow:inset 3px 3px 0 #696969, inset -2px -2px 0 #e3e3e3"></div>
<div class="t s" style="left:1238.5px;top:706.85px;font-size:29px;line-height:29px;letter-spacing:-0.5px;">1.900</div>
<div style="left:1371px;top:694.5px;width:120.5px;height:50px;background:#fff;border-style:solid;border-width:2px 3px 3px 2px;border-color:#7c7c7c #fff #fff #7c7c7c;box-sizing:border-box;box-shadow:inset 3px 3px 0 #696969, inset -2px -2px 0 #e3e3e3"></div>
<div class="t s" style="left:1380px;top:706.85px;font-size:29px;line-height:29px;letter-spacing:-0.5px;">1.500</div>
<div style="left:1512.5px;top:694.5px;width:120px;height:50px;background:#fff;border-style:solid;border-width:2px 3px 3px 2px;border-color:#7c7c7c #fff #fff #7c7c7c;box-sizing:border-box;box-shadow:inset 3px 3px 0 #696969, inset -2px -2px 0 #e3e3e3"></div>
<div class="t s" style="left:1521.5px;top:706.85px;font-size:29px;line-height:29px;letter-spacing:-0.5px;">0</div>
<div style="left:1653.5px;top:694.5px;width:121px;height:50px;background:#fff;border-style:solid;border-width:2px 3px 3px 2px;border-color:#7c7c7c #fff #fff #7c7c7c;box-sizing:border-box;box-shadow:inset 3px 3px 0 #696969, inset -2px -2px 0 #e3e3e3"></div>
<div class="t s" style="left:1662.5px;top:706.85px;font-size:29px;line-height:29px;letter-spacing:-0.5px;">0</div>
<div class="t s" style="left:1018.5px;top:766.35px;font-size:29px;line-height:29px;letter-spacing:-0.5px;">Lead Count</div>
<div style="left:1229.5px;top:753.5px;width:120.5px;height:50px;background:#fff;border-style:solid;border-width:2px 3px 3px 2px;border-color:#7c7c7c #fff #fff #7c7c7c;box-sizing:border-box;box-shadow:inset 3px 3px 0 #696969, inset -2px -2px 0 #e3e3e3"></div>
<div class="t s" style="left:1238.5px;top:765.85px;font-size:29px;line-height:29px;letter-spacing:-0.5px;">4</div>
<div style="left:1371px;top:753.5px;width:120.5px;height:50px;background:#fff;border-style:solid;border-width:2px 3px 3px 2px;border-color:#7c7c7c #fff #fff #7c7c7c;box-sizing:border-box;box-shadow:inset 3px 3px 0 #696969, inset -2px -2px 0 #e3e3e3"></div>
<div class="t s" style="left:1380px;top:765.85px;font-size:29px;line-height:29px;letter-spacing:-0.5px;">2</div>
<div style="left:1512.5px;top:753.5px;width:120px;height:50px;background:#fff;border-style:solid;border-width:2px 3px 3px 2px;border-color:#7c7c7c #fff #fff #7c7c7c;box-sizing:border-box;box-shadow:inset 3px 3px 0 #696969, inset -2px -2px 0 #e3e3e3"></div>
<div class="t s" style="left:1521.5px;top:765.85px;font-size:29px;line-height:29px;letter-spacing:-0.5px;">1</div>
<div style="left:1653.5px;top:753.5px;width:121px;height:50px;background:#fff;border-style:solid;border-width:2px 3px 3px 2px;border-color:#7c7c7c #fff #fff #7c7c7c;box-sizing:border-box;box-shadow:inset 3px 3px 0 #696969, inset -2px -2px 0 #e3e3e3"></div>
<div class="t s" style="left:1662.5px;top:765.85px;font-size:29px;line-height:29px;letter-spacing:-0.5px;">3</div>
<div class="t s" style="left:1018.5px;top:827.35px;font-size:29px;line-height:29px;letter-spacing:-0.5px;">Lead Pitch</div>
<div style="left:1229.5px;top:815px;width:120.5px;height:50px;background:#fff;border-style:solid;border-width:2px 3px 3px 2px;border-color:#7c7c7c #fff #fff #7c7c7c;box-sizing:border-box;box-shadow:inset 3px 3px 0 #696969, inset -2px -2px 0 #e3e3e3"></div>
<div class="t s" style="left:1238.5px;top:827.35px;font-size:29px;line-height:29px;letter-spacing:-0.5px;">0.400</div>
<div style="left:1371px;top:815px;width:120.5px;height:50px;background:#fff;border-style:solid;border-width:2px 3px 3px 2px;border-color:#7c7c7c #fff #fff #7c7c7c;box-sizing:border-box;box-shadow:inset 3px 3px 0 #696969, inset -2px -2px 0 #e3e3e3"></div>
<div class="t s" style="left:1380px;top:827.35px;font-size:29px;line-height:29px;letter-spacing:-0.5px;">0.400</div>
<div style="left:1512.5px;top:815px;width:120px;height:50px;background:#fff;border-style:solid;border-width:2px 3px 3px 2px;border-color:#7c7c7c #fff #fff #7c7c7c;box-sizing:border-box;box-shadow:inset 3px 3px 0 #696969, inset -2px -2px 0 #e3e3e3"></div>
<div class="t s" style="left:1521.5px;top:827.35px;font-size:29px;line-height:29px;letter-spacing:-0.5px;">0.000</div>
<div style="left:1653.5px;top:815px;width:121px;height:50px;background:#fff;border-style:solid;border-width:2px 3px 3px 2px;border-color:#7c7c7c #fff #fff #7c7c7c;box-sizing:border-box;box-shadow:inset 3px 3px 0 #696969, inset -2px -2px 0 #e3e3e3"></div>
<div class="t s" style="left:1662.5px;top:827.35px;font-size:29px;line-height:29px;letter-spacing:-0.5px;">0.400</div>
<div class="t s" style="left:1018.5px;top:886.85px;font-size:29px;line-height:29px;letter-spacing:-0.5px;">Lead Length</div>
<div style="left:1229.5px;top:878.5px;width:120.5px;height:50px;background:#fff;border-style:solid;border-width:2px 3px 3px 2px;border-color:#7c7c7c #fff #fff #7c7c7c;box-sizing:border-box;box-shadow:inset 3px 3px 0 #696969, inset -2px -2px 0 #e3e3e3"></div>
<div class="t s" style="left:1238.5px;top:890.85px;font-size:29px;line-height:29px;letter-spacing:-0.5px;">0.200</div>
<div style="left:1371px;top:878.5px;width:120.5px;height:50px;background:#fff;border-style:solid;border-width:2px 3px 3px 2px;border-color:#7c7c7c #fff #fff #7c7c7c;box-sizing:border-box;box-shadow:inset 3px 3px 0 #696969, inset -2px -2px 0 #e3e3e3"></div>
<div class="t s" style="left:1380px;top:890.85px;font-size:29px;line-height:29px;letter-spacing:-0.5px;">0.200</div>
<div style="left:1512.5px;top:878.5px;width:120px;height:50px;background:#fff;border-style:solid;border-width:2px 3px 3px 2px;border-color:#7c7c7c #fff #fff #7c7c7c;box-sizing:border-box;box-shadow:inset 3px 3px 0 #696969, inset -2px -2px 0 #e3e3e3"></div>
<div class="t s" style="left:1521.5px;top:890.85px;font-size:29px;line-height:29px;letter-spacing:-0.5px;">0.600</div>
<div style="left:1653.5px;top:878.5px;width:121px;height:50px;background:#fff;border-style:solid;border-width:2px 3px 3px 2px;border-color:#7c7c7c #fff #fff #7c7c7c;box-sizing:border-box;box-shadow:inset 3px 3px 0 #696969, inset -2px -2px 0 #e3e3e3"></div>
<div class="t s" style="left:1662.5px;top:890.85px;font-size:29px;line-height:29px;letter-spacing:-0.5px;">0.200</div>
<div class="t s" style="left:1018.5px;top:950.05px;font-size:29px;line-height:29px;letter-spacing:-0.5px;">Lead Width</div>
<div style="left:1229.5px;top:933px;width:120.5px;height:50px;background:#fff;border-style:solid;border-width:2px 3px 3px 2px;border-color:#7c7c7c #fff #fff #7c7c7c;box-sizing:border-box;box-shadow:inset 3px 3px 0 #696969, inset -2px -2px 0 #e3e3e3"></div>
<div class="t s" style="left:1238.5px;top:945.35px;font-size:29px;line-height:29px;letter-spacing:-0.5px;">0.200</div>
<div style="left:1371px;top:933px;width:120.5px;height:50px;background:#fff;border-style:solid;border-width:2px 3px 3px 2px;border-color:#7c7c7c #fff #fff #7c7c7c;box-sizing:border-box;box-shadow:inset 3px 3px 0 #696969, inset -2px -2px 0 #e3e3e3"></div>
<div class="t s" style="left:1380px;top:945.35px;font-size:29px;line-height:29px;letter-spacing:-0.5px;">0.200</div>
<div style="left:1512.5px;top:933px;width:120px;height:50px;background:#fff;border-style:solid;border-width:2px 3px 3px 2px;border-color:#7c7c7c #fff #fff #7c7c7c;box-sizing:border-box;box-shadow:inset 3px 3px 0 #696969, inset -2px -2px 0 #e3e3e3"></div>
<div class="t s" style="left:1521.5px;top:945.35px;font-size:29px;line-height:29px;letter-spacing:-0.5px;">1.000</div>
<div style="left:1653.5px;top:933px;width:121px;height:50px;background:#fff;border-style:solid;border-width:2px 3px 3px 2px;border-color:#7c7c7c #fff #fff #7c7c7c;box-sizing:border-box;box-shadow:inset 3px 3px 0 #696969, inset -2px -2px 0 #e3e3e3"></div>
<div class="t s" style="left:1662.5px;top:945.35px;font-size:29px;line-height:29px;letter-spacing:-0.5px;">0.200</div>
<div class="t s" style="left:1018.5px;top:1005.35px;font-size:29px;line-height:29px;letter-spacing:-0.5px;">Part Height</div>
<div style="left:1229.5px;top:993px;width:120.5px;height:50px;background:#fff;border-style:solid;border-width:2px 3px 3px 2px;border-color:#7c7c7c #fff #fff #7c7c7c;box-sizing:border-box;box-shadow:inset 3px 3px 0 #696969, inset -2px -2px 0 #e3e3e3"></div>
<div class="t s" style="left:1238.5px;top:1005.35px;font-size:29px;line-height:29px;letter-spacing:-0.5px;">0.450</div>
<div style="left:975px;top:1126px;width:875px;height:570px;border:2px solid #fff;box-sizing:border-box"></div>
<div style="left:973px;top:1124px;width:875px;height:570px;border:2px solid #a0a0a0;box-sizing:border-box"></div>
<div style="left:990px;top:1112px;width:321px;height:20px;background:#f0f0f0"></div>
<div class="t s" style="left:995px;top:1113.35px;font-size:29px;line-height:29px;letter-spacing:-0.5px;">General Part Information</div>
<div class="t s" style="left:1002px;top:1168.35px;font-size:29px;line-height:29px;letter-spacing:-0.5px;">Description</div>
<div style="left:1278px;top:1168px;width:518px;height:154px;background:#fff;border-style:solid;border-width:2px 3px 3px 2px;border-color:#7c7c7c #fff #fff #7c7c7c;box-sizing:border-box;box-shadow:inset 3px 3px 0 #696969, inset -2px -2px 0 #e3e3e3"></div>
<div class="t s" style="left:1002px;top:1359.35px;font-size:29px;line-height:29px;letter-spacing:-0.5px;">Polarized</div>
<div style="left:1280px;top:1349px;width:516px;height:51px;background:#fff;border-style:solid;border-width:2px 3px 3px 2px;border-color:#7c7c7c #fff #fff #7c7c7c;box-sizing:border-box;box-shadow:inset 3px 3px 0 #696969, inset -2px -2px 0 #e3e3e3"></div>
<div style="left:1747.5px;top:1355.3px;width:44px;height:39px;background:#f0f0f0;border-style:solid;border-width:3px 3px 3px 3px;border-color:#fff #696969 #696969 #fff;box-sizing:border-box;box-shadow:inset 2px 2px 0 #e3e3e3, inset -2.5px -2.5px 0 #a0a0a0"></div>
<svg style="left:1760px;top:1370.3px" width="19" height="11" viewBox="0 0 19 11"><polygon points="0,0 19,0 9.5,11" fill="#000"/></svg>
<div class="t s" style="left:1287.8px;top:1361.35px;font-size:29px;line-height:29px;letter-spacing:-0.5px;">Yes</div>
<div class="t s" style="left:1002px;top:1428.05px;font-size:29px;line-height:29px;letter-spacing:-0.5px;">Polarity Mark Style</div>
<div style="left:1280px;top:1417px;width:516px;height:51px;background:#fff;border-style:solid;border-width:2px 3px 3px 2px;border-color:#7c7c7c #fff #fff #7c7c7c;box-sizing:border-box;box-shadow:inset 3px 3px 0 #696969, inset -2px -2px 0 #e3e3e3"></div>
<div style="left:1747.5px;top:1423.3px;width:44px;height:39px;background:#f0f0f0;border-style:solid;border-width:3px 3px 3px 3px;border-color:#fff #696969 #696969 #fff;box-sizing:border-box;box-shadow:inset 2px 2px 0 #e3e3e3, inset -2.5px -2.5px 0 #a0a0a0"></div>
<svg style="left:1760px;top:1438.3px" width="19" height="11" viewBox="0 0 19 11"><polygon points="0,0 19,0 9.5,11" fill="#000"/></svg>
<div class="t s" style="left:1287.8px;top:1429.35px;font-size:29px;line-height:29px;letter-spacing:-0.5px;">LINE</div>
<div class="t s" style="left:1002px;top:1495.35px;font-size:29px;line-height:29px;letter-spacing:-0.5px;">Polarity Position</div>
<div style="left:1280px;top:1484.5px;width:516px;height:51px;background:#fff;border-style:solid;border-width:2px 3px 3px 2px;border-color:#7c7c7c #fff #fff #7c7c7c;box-sizing:border-box;box-shadow:inset 3px 3px 0 #696969, inset -2px -2px 0 #e3e3e3"></div>
<div style="left:1747.5px;top:1490.8px;width:44px;height:39px;background:#f0f0f0;border-style:solid;border-width:3px 3px 3px 3px;border-color:#fff #696969 #696969 #fff;box-sizing:border-box;box-shadow:inset 2px 2px 0 #e3e3e3, inset -2.5px -2.5px 0 #a0a0a0"></div>
<svg style="left:1760px;top:1505.8px" width="19" height="11" viewBox="0 0 19 11"><polygon points="0,0 19,0 9.5,11" fill="#000"/></svg>
<div class="t s" style="left:1287.8px;top:1496.85px;font-size:29px;line-height:29px;letter-spacing:-0.5px;">UP</div>
<div class="t s" style="left:1002px;top:1563.35px;font-size:29px;line-height:29px;letter-spacing:-0.5px;">Functional Class</div>
<div style="left:1280px;top:1548px;width:516px;height:51px;background:#fff;border-style:solid;border-width:2px 3px 3px 2px;border-color:#7c7c7c #fff #fff #7c7c7c;box-sizing:border-box;box-shadow:inset 3px 3px 0 #696969, inset -2px -2px 0 #e3e3e3"></div>
<div style="left:1747.5px;top:1554.3px;width:44px;height:39px;background:#f0f0f0;border-style:solid;border-width:3px 3px 3px 3px;border-color:#fff #696969 #696969 #fff;box-sizing:border-box;box-shadow:inset 2px 2px 0 #e3e3e3, inset -2.5px -2.5px 0 #a0a0a0"></div>
<svg style="left:1760px;top:1569.3px" width="19" height="11" viewBox="0 0 19 11"><polygon points="0,0 19,0 9.5,11" fill="#000"/></svg>
<div class="t s" style="left:1287.8px;top:1560.35px;font-size:29px;line-height:29px;letter-spacing:-0.5px;">Fixed Resistor</div>
<div class="t s" style="left:1002px;top:1631.35px;font-size:29px;line-height:29px;letter-spacing:-0.5px;">Rank Component</div>
<div style="left:1280px;top:1615.5px;width:516px;height:51px;background:#fff;border-style:solid;border-width:2px 3px 3px 2px;border-color:#7c7c7c #fff #fff #7c7c7c;box-sizing:border-box;box-shadow:inset 3px 3px 0 #696969, inset -2px -2px 0 #e3e3e3"></div>
<div style="left:1747.5px;top:1621.8px;width:44px;height:39px;background:#f0f0f0;border-style:solid;border-width:3px 3px 3px 3px;border-color:#fff #696969 #696969 #fff;box-sizing:border-box;box-shadow:inset 2px 2px 0 #e3e3e3, inset -2.5px -2.5px 0 #a0a0a0"></div>
<svg style="left:1760px;top:1636.8px" width="19" height="11" viewBox="0 0 19 11"><polygon points="0,0 19,0 9.5,11" fill="#000"/></svg>
<div class="t s" style="left:1287.8px;top:1627.85px;font-size:29px;line-height:29px;letter-spacing:-0.5px;">No</div>
<div style="left:975.6px;top:1734.5px;width:874.4px;height:365.5px;border:2px solid #fff;box-sizing:border-box"></div>
<div style="left:973.6px;top:1732.5px;width:874.4px;height:365.5px;border:2px solid #a0a0a0;box-sizing:border-box"></div>
<div style="left:989.7px;top:1720.5px;width:145px;height:20px;background:#f0f0f0"></div>
<div class="t s" style="left:994.7px;top:1721.05px;font-size:29px;line-height:29px;letter-spacing:-0.5px;">Mount Pins</div>
<div style="left:996.6px;top:1776.5px;width:757.1px;height:47.5px;background:#f0f0f0"></div>
<div style="left:996.6px;top:1776.5px;width:757.1px;height:2px;background:#fff"></div>
<div style="left:996.6px;top:1821.7px;width:757.1px;height:2.4px;background:#a0a0a0"></div>
<div style="left:1072px;top:1776.5px;width:2px;height:47.5px;background:#a0a0a0"></div>
<div style="left:1208px;top:1776.5px;width:2px;height:47.5px;background:#a0a0a0"></div>
<div style="left:1368px;top:1776.5px;width:2px;height:47.5px;background:#a0a0a0"></div>
<div style="left:1512px;top:1776.5px;width:2px;height:47.5px;background:#a0a0a0"></div>
<div style="left:1671px;top:1776.5px;width:2px;height:47.5px;background:#a0a0a0"></div>
<div class="t" style="left:1080.5px;top:1784.95px;font-size:31px;line-height:31px;">Pin No</div>
<div class="t" style="left:1216px;top:1784.95px;font-size:31px;line-height:31px;">Pin Name</div>
<div class="t" style="left:1376px;top:1784.95px;font-size:31px;line-height:31px;">Direction</div>
<div class="t" style="left:1520px;top:1784.95px;font-size:31px;line-height:31px;">Skip Pins</div>
<div class="t" style="left:1679.7px;top:1784.95px;font-size:31px;line-height:31px;">Lead</div>
<div style="left:996.6px;top:1824px;width:757.1px;height:141px;background:#fff"></div>
<div style="left:996.6px;top:1868.5px;width:757.1px;height:2.5px;background:#f0f0f0"></div>
<div style="left:1072px;top:1824px;width:2px;height:44.5px;background:#f0f0f0"></div>
<div style="left:1208px;top:1824px;width:2px;height:44.5px;background:#f0f0f0"></div>
<div style="left:1368px;top:1824px;width:2px;height:44.5px;background:#f0f0f0"></div>
<div style="left:1512px;top:1824px;width:2px;height:44.5px;background:#f0f0f0"></div>
<div style="left:1671px;top:1824px;width:2px;height:44.5px;background:#f0f0f0"></div>
<div style="left:1019.5px;top:1830px;width:31.5px;height:30px;background:#fff;border-style:solid;border-width:2px 3px 3px 2px;border-color:#7c7c7c #fff #fff #7c7c7c;box-sizing:border-box;box-shadow:inset 3px 3px 0 #696969, inset -2px -2px 0 #e3e3e3"></div>
<div class="t" style="left:1080.5px;top:1830.65px;font-size:31px;line-height:31px;">1</div>
<div class="t" style="left:1216px;top:1830.65px;font-size:31px;line-height:31px;">1</div>
<div class="t" style="left:1376px;top:1830.65px;font-size:31px;line-height:31px;">0</div>
<div style="left:1470.4px;top:1827px;width:41px;height:41px;background:#f0f0f0;border-style:solid;border-width:0 3px 3px 0;border-color:#a0a0a0;box-sizing:border-box"></div>
<svg style="left:1480px;top:1841px" width="19" height="11" viewBox="0 0 19 11"><polygon points="0,0 19,0 9.5,11" fill="#000"/></svg>
<div class="t" style="left:1520px;top:1830.65px;font-size:31px;line-height:31px;">None</div>
<div style="left:1630px;top:1827px;width:41px;height:41px;background:#f0f0f0;border-style:solid;border-width:0 3px 3px 0;border-color:#a0a0a0;box-sizing:border-box"></div>
<svg style="left:1640px;top:1841px" width="19" height="11" viewBox="0 0 19 11"><polygon points="0,0 19,0 9.5,11" fill="#000"/></svg>
<div class="t" style="left:1679.7px;top:1830.65px;font-size:31px;line-height:31px;">FLAT</div>
<div style="left:996.6px;top:1916.1px;width:757.1px;height:2.5px;background:#f0f0f0"></div>
<div style="left:1072px;top:1871.6px;width:2px;height:44.5px;background:#f0f0f0"></div>
<div style="left:1208px;top:1871.6px;width:2px;height:44.5px;background:#f0f0f0"></div>
<div style="left:1368px;top:1871.6px;width:2px;height:44.5px;background:#f0f0f0"></div>
<div style="left:1512px;top:1871.6px;width:2px;height:44.5px;background:#f0f0f0"></div>
<div style="left:1671px;top:1871.6px;width:2px;height:44.5px;background:#f0f0f0"></div>
<div style="left:1019.5px;top:1877.6px;width:31.5px;height:30px;background:#fff;border-style:solid;border-width:2px 3px 3px 2px;border-color:#7c7c7c #fff #fff #7c7c7c;box-sizing:border-box;box-shadow:inset 3px 3px 0 #696969, inset -2px -2px 0 #e3e3e3"></div>
<div class="t" style="left:1080.5px;top:1877.65px;font-size:31px;line-height:31px;">2</div>
<div class="t" style="left:1216px;top:1877.65px;font-size:31px;line-height:31px;">15</div>
<div class="t" style="left:1376px;top:1877.65px;font-size:31px;line-height:31px;">0</div>
<div style="left:1470.4px;top:1874.6px;width:41px;height:41px;background:#f0f0f0;border-style:solid;border-width:0 3px 3px 0;border-color:#a0a0a0;box-sizing:border-box"></div>
<svg style="left:1480px;top:1888.6px" width="19" height="11" viewBox="0 0 19 11"><polygon points="0,0 19,0 9.5,11" fill="#000"/></svg>
<div class="t" style="left:1520px;top:1877.65px;font-size:31px;line-height:31px;">None</div>
<div style="left:1630px;top:1874.6px;width:41px;height:41px;background:#f0f0f0;border-style:solid;border-width:0 3px 3px 0;border-color:#a0a0a0;box-sizing:border-box"></div>
<svg style="left:1640px;top:1888.6px" width="19" height="11" viewBox="0 0 19 11"><polygon points="0,0 19,0 9.5,11" fill="#000"/></svg>
<div class="t" style="left:1679.7px;top:1877.65px;font-size:31px;line-height:31px;">User</div>
<div style="left:996.6px;top:1962px;width:757.1px;height:2.5px;background:#f0f0f0"></div>
<div style="left:1072px;top:1917.5px;width:2px;height:44.5px;background:#f0f0f0"></div>
<div style="left:1208px;top:1917.5px;width:2px;height:44.5px;background:#f0f0f0"></div>
<div style="left:1368px;top:1917.5px;width:2px;height:44.5px;background:#f0f0f0"></div>
<div style="left:1512px;top:1917.5px;width:2px;height:44.5px;background:#f0f0f0"></div>
<div style="left:1671px;top:1917.5px;width:2px;height:44.5px;background:#f0f0f0"></div>
<div style="left:1019.5px;top:1923.5px;width:31.5px;height:30px;background:#fff;border-style:solid;border-width:2px 3px 3px 2px;border-color:#7c7c7c #fff #fff #7c7c7c;box-sizing:border-box;box-shadow:inset 3px 3px 0 #696969, inset -2px -2px 0 #e3e3e3"></div>
<div class="t" style="left:1080.5px;top:1924.65px;font-size:31px;line-height:31px;">3</div>
<div class="t" style="left:1216px;top:1924.65px;font-size:31px;line-height:31px;">14</div>
<div class="t" style="left:1376px;top:1924.65px;font-size:31px;line-height:31px;">0</div>
<div style="left:1470.4px;top:1920.5px;width:41px;height:41px;background:#f0f0f0;border-style:solid;border-width:0 3px 3px 0;border-color:#a0a0a0;box-sizing:border-box"></div>
<svg style="left:1480px;top:1934.5px" width="19" height="11" viewBox="0 0 19 11"><polygon points="0,0 19,0 9.5,11" fill="#000"/></svg>
<div class="t" style="left:1520px;top:1924.65px;font-size:31px;line-height:31px;">None</div>
<div style="left:1630px;top:1920.5px;width:41px;height:41px;background:#f0f0f0;border-style:solid;border-width:0 3px 3px 0;border-color:#a0a0a0;box-sizing:border-box"></div>
<svg style="left:1640px;top:1934.5px" width="19" height="11" viewBox="0 0 19 11"><polygon points="0,0 19,0 9.5,11" fill="#000"/></svg>
<div class="t" style="left:1679.7px;top:1924.65px;font-size:31px;line-height:31px;">FLAT</div>
<div style="left:1755.6px;top:1777.8px;width:40.4px;height:187.2px;background:#f0f0f0"></div>
<svg style="left:1765.5px;top:1792.5px" width="21" height="15" viewBox="0 0 21 15"><path d="M2.5,12.5 L10.5,2.5 L18.5,12.5" fill="none" stroke="#606060" stroke-width="5"/></svg>
<div style="left:1756.5px;top:1822px;width:38.2px;height:58.7px;background:#cdcdcd"></div>
</div></div>
<div style="left:1800.5px;top:243.8px;width:2.5px;height:1721.2px;background:#ffffff"></div>
<div style="left:1803px;top:243.8px;width:40px;height:1721.2px;background:#f0f0f0"></div>
<svg style="left:1812.5px;top:259.5px" width="21" height="15" viewBox="0 0 21 15"><path d="M2.5,12.5 L10.5,2.5 L18.5,12.5" fill="none" stroke="#606060" stroke-width="5"/></svg>
<div style="left:1804px;top:288px;width:38.4px;height:1441px;background:#cdcdcd"></div>
<svg style="left:1812.5px;top:1936.5px" width="21" height="15" viewBox="0 0 21 15"><path d="M2.5,2.5 L10.5,12.5 L18.5,2.5" fill="none" stroke="#606060" stroke-width="5"/></svg>
<div style="left:1872px;top:169px;width:822px;height:1796px;overflow:hidden">
<div style="left:-1872px;top:-169px;width:3755px;height:2065px">
<div style="left:1876px;top:182.5px;width:25px;height:24.5px;border:2.5px solid #000;background:#fff;box-sizing:border-box"></div>
<div style="left:1881.5px;top:193.5px;width:14px;height:2.5px;background:#000"></div>
<div class="t" style="left:1914px;top:178.38px;font-size:32.5px;line-height:32.5px;color:#6d6d6d;font-weight:bold;">Nozzle Selection</div>
<div style="left:1907.5px;top:222.42px;width:372.5px;height:49.5px;background:#fff"></div>
<div style="left:2282px;top:222.42px;width:409px;height:49.5px;background:#fff"></div>
<div style="left:1907.5px;top:222.42px;width:371.5px;height:49.5px;overflow:hidden">
<div style="left:-1907.5px;top:-222.42px;width:3755px;height:2065px">
<div class="t" style="left:1913.5px;top:230.72px;font-size:32px;line-height:32px;">Nozzle</div>
</div></div>
<div style="left:1876px;top:287.34px;width:25px;height:24.5px;border:2.5px solid #000;background:#fff;box-sizing:border-box"></div>
<div style="left:1881.5px;top:298.34px;width:14px;height:2.5px;background:#000"></div>
<div class="t" style="left:1914px;top:283.22px;font-size:32.5px;line-height:32.5px;color:#6d6d6d;font-weight:bold;">Speed Parameters</div>
<div style="left:1907.5px;top:327.26px;width:372.5px;height:49.5px;background:#fff"></div>
<div style="left:2282px;top:327.26px;width:409px;height:49.5px;background:#fff"></div>
<div style="left:1907.5px;top:327.26px;width:371.5px;height:49.5px;overflow:hidden">
<div style="left:-1907.5px;top:-327.26px;width:3755px;height:2065px">
<div class="t" style="left:1913.5px;top:335.56px;font-size:32px;line-height:32px;">Pickup Speed</div>
</div></div>
<div class="t" style="left:2288px;top:336.06px;font-size:32px;line-height:32px;">100</div>
<div style="left:2647.7px;top:327.26px;width:43.3px;height:49.5px;background:#f0f0f0;border-style:solid;border-width:2px 2.5px 2.5px 2px;border-color:#fff #a0a0a0 #a0a0a0 #fff;box-sizing:border-box"></div>
<svg style="left:2659.8px;top:347.76px" width="19" height="11" viewBox="0 0 19 11"><polygon points="0,0 19,0 9.5,11" fill="#000"/></svg>
<div style="left:1907.5px;top:379.68px;width:372.5px;height:49.5px;background:#fff"></div>
<div style="left:2282px;top:379.68px;width:409px;height:49.5px;background:#fff"></div>
<div style="left:1907.5px;top:379.68px;width:371.5px;height:49.5px;overflow:hidden">
<div style="left:-1907.5px;top:-379.68px;width:3755px;height:2065px">
<div class="t" style="left:1913.5px;top:387.98px;font-size:32px;line-height:32px;">Mount Speed</div>
</div></div>
<div class="t" style="left:2288px;top:388.48px;font-size:32px;line-height:32px;">100</div>
<div style="left:2647.7px;top:379.68px;width:43.3px;height:49.5px;background:#f0f0f0;border-style:solid;border-width:2px 2.5px 2.5px 2px;border-color:#fff #a0a0a0 #a0a0a0 #fff;box-sizing:border-box"></div>
<svg style="left:2659.8px;top:400.18px" width="19" height="11" viewBox="0 0 19 11"><polygon points="0,0 19,0 9.5,11" fill="#000"/></svg>
<div style="left:1907.5px;top:432.1px;width:372.5px;height:49.5px;background:#fff"></div>
<div style="left:2282px;top:432.1px;width:409px;height:49.5px;background:#fff"></div>
<div style="left:1907.5px;top:432.1px;width:371.5px;height:49.5px;overflow:hidden">
<div style="left:-1907.5px;top:-432.1px;width:3755px;height:2065px">
<div class="t" style="left:1913.5px;top:440.4px;font-size:32px;line-height:32px;">Pickup hold time</div>
</div></div>
<div class="t" style="left:2288px;top:440.9px;font-size:32px;line-height:32px;">Standard</div>
<div style="left:2647.7px;top:432.1px;width:43.3px;height:49.5px;background:#f0f0f0;border-style:solid;border-width:2px 2.5px 2.5px 2px;border-color:#fff #a0a0a0 #a0a0a0 #fff;box-sizing:border-box"></div>
<svg style="left:2659.8px;top:452.6px" width="19" height="11" viewBox="0 0 19 11"><polygon points="0,0 19,0 9.5,11" fill="#000"/></svg>
<div style="left:1907.5px;top:484.52px;width:372.5px;height:49.5px;background:#fff"></div>
<div style="left:2282px;top:484.52px;width:409px;height:49.5px;background:#fff"></div>
<div style="left:1907.5px;top:484.52px;width:371.5px;height:49.5px;overflow:hidden">
<div style="left:-1907.5px;top:-484.52px;width:3755px;height:2065px">
<div class="t" style="left:1913.5px;top:492.82px;font-size:32px;line-height:32px;">Mount hold time</div>
</div></div>
<div class="t" style="left:2288px;top:493.32px;font-size:32px;line-height:32px;">Standard</div>
<div style="left:2647.7px;top:484.52px;width:43.3px;height:49.5px;background:#f0f0f0;border-style:solid;border-width:2px 2.5px 2.5px 2px;border-color:#fff #a0a0a0 #a0a0a0 #fff;box-sizing:border-box"></div>
<svg style="left:2659.8px;top:505.02px" width="19" height="11" viewBox="0 0 19 11"><polygon points="0,0 19,0 9.5,11" fill="#000"/></svg>
<div style="left:1907.5px;top:536.94px;width:372.5px;height:49.5px;background:#fff"></div>
<div style="left:2282px;top:536.94px;width:409px;height:49.5px;background:#fff"></div>
<div style="left:1907.5px;top:536.94px;width:371.5px;height:49.5px;overflow:hidden">
<div style="left:-1907.5px;top:-536.94px;width:3755px;height:2065px">
<div class="t" style="left:1913.5px;top:545.24px;font-size:32px;line-height:32px;">Theta Axis Speed</div>
</div></div>
<div class="t" style="left:2288px;top:545.74px;font-size:32px;line-height:32px;">Auto</div>
<div style="left:2647.7px;top:536.94px;width:43.3px;height:49.5px;background:#f0f0f0;border-style:solid;border-width:2px 2.5px 2.5px 2px;border-color:#fff #a0a0a0 #a0a0a0 #fff;box-sizing:border-box"></div>
<svg style="left:2659.8px;top:557.44px" width="19" height="11" viewBox="0 0 19 11"><polygon points="0,0 19,0 9.5,11" fill="#000"/></svg>
<div style="left:1876px;top:601.86px;width:25px;height:24.5px;border:2.5px solid #000;background:#fff;box-sizing:border-box"></div>
<div style="left:1881.5px;top:612.86px;width:14px;height:2.5px;background:#000"></div>
<div class="t" style="left:1914px;top:597.74px;font-size:32.5px;line-height:32.5px;color:#6d6d6d;font-weight:bold;">Recognition</div>
<div style="left:1907.5px;top:641.78px;width:372.5px;height:49.5px;background:#fff"></div>
<div style="left:2282px;top:641.78px;width:409px;height:49.5px;background:#fff"></div>
<div style="left:1907.5px;top:641.78px;width:371.5px;height:49.5px;overflow:hidden">
<div style="left:-1907.5px;top:-641.78px;width:3755px;height:2065px">
<div class="t" style="left:1913.5px;top:650.08px;font-size:32px;line-height:32px;">Camera</div>
</div></div>
<div class="t" style="left:2288px;top:650.58px;font-size:32px;line-height:32px;">2D Camera</div>
<div style="left:2647.7px;top:641.78px;width:43.3px;height:49.5px;background:#f0f0f0;border-style:solid;border-width:2px 2.5px 2.5px 2px;border-color:#fff #a0a0a0 #a0a0a0 #fff;box-sizing:border-box"></div>
<svg style="left:2659.8px;top:662.28px" width="19" height="11" viewBox="0 0 19 11"><polygon points="0,0 19,0 9.5,11" fill="#000"/></svg>
<div style="left:1907.5px;top:694.2px;width:372.5px;height:49.5px;background:#fff"></div>
<div style="left:2282px;top:694.2px;width:409px;height:49.5px;background:#fff"></div>
<div style="left:1907.5px;top:694.2px;width:371.5px;height:49.5px;overflow:hidden">
<div style="left:-1907.5px;top:-694.2px;width:3755px;height:2065px">
<div class="t" style="left:1913.5px;top:702.5px;font-size:32px;line-height:32px;">Lighting</div>
</div></div>
<div class="t" style="left:2288px;top:703px;font-size:32px;line-height:32px;">Direct Lighting</div>
<div style="left:2647.7px;top:694.2px;width:43.3px;height:49.5px;background:#f0f0f0;border-style:solid;border-width:2px 2.5px 2.5px 2px;border-color:#fff #a0a0a0 #a0a0a0 #fff;box-sizing:border-box"></div>
<svg style="left:2659.8px;top:714.7px" width="19" height="11" viewBox="0 0 19 11"><polygon points="0,0 19,0 9.5,11" fill="#000"/></svg>
<div style="left:1907.5px;top:746.62px;width:372.5px;height:49.5px;background:#fff"></div>
<div style="left:2282px;top:746.62px;width:409px;height:49.5px;background:#fff"></div>
<div style="left:1907.5px;top:746.62px;width:371.5px;height:49.5px;overflow:hidden">
<div style="left:-1907.5px;top:-746.62px;width:3755px;height:2065px">
<div class="t" style="left:1913.5px;top:754.92px;font-size:32px;line-height:32px;">Recognition Speed</div>
</div></div>
<div class="t" style="left:2288px;top:755.42px;font-size:32px;line-height:32px;">Auto</div>
<div style="left:2647.7px;top:746.62px;width:43.3px;height:49.5px;background:#f0f0f0;border-style:solid;border-width:2px 2.5px 2.5px 2px;border-color:#fff #a0a0a0 #a0a0a0 #fff;box-sizing:border-box"></div>
<svg style="left:2659.8px;top:767.12px" width="19" height="11" viewBox="0 0 19 11"><polygon points="0,0 19,0 9.5,11" fill="#000"/></svg>
<div style="left:1907.5px;top:799.04px;width:372.5px;height:49.5px;background:#fff"></div>
<div style="left:2282px;top:799.04px;width:409px;height:49.5px;background:#fff"></div>
<div style="left:1907.5px;top:799.04px;width:371.5px;height:49.5px;overflow:hidden">
<div style="left:-1907.5px;top:-799.04px;width:3755px;height:2065px">
<div class="t" style="left:1913.5px;top:807.34px;font-size:32px;line-height:32px;">Recognition Height</div>
</div></div>
<div class="t" style="left:2288px;top:807.84px;font-size:32px;line-height:32px;">0</div>
<div style="left:1907.5px;top:851.46px;width:372.5px;height:49.5px;background:#fff"></div>
<div style="left:2282px;top:851.46px;width:409px;height:49.5px;background:#fff"></div>
<div style="left:1907.5px;top:851.46px;width:371.5px;height:49.5px;overflow:hidden">
<div style="left:-1907.5px;top:-851.46px;width:3755px;height:2065px">
<div class="t" style="left:1913.5px;top:859.76px;font-size:32px;line-height:32px;">Scan Count</div>
</div></div>
<div class="t" style="left:2288px;top:860.26px;font-size:32px;line-height:32px;">Auto</div>
<div style="left:2647.7px;top:851.46px;width:43.3px;height:49.5px;background:#f0f0f0;border-style:solid;border-width:2px 2.5px 2.5px 2px;border-color:#fff #a0a0a0 #a0a0a0 #fff;box-sizing:border-box"></div>
<svg style="left:2659.8px;top:871.96px" width="19" height="11" viewBox="0 0 19 11"><polygon points="0,0 19,0 9.5,11" fill="#000"/></svg>
<div style="left:1907.5px;top:903.88px;width:372.5px;height:49.5px;background:#fff"></div>
<div style="left:2282px;top:903.88px;width:409px;height:49.5px;background:#fff"></div>
<div style="left:1907.5px;top:903.88px;width:371.5px;height:49.5px;overflow:hidden">
<div style="left:-1907.5px;top:-903.88px;width:3755px;height:2065px">
<div class="t" style="left:1913.5px;top:912.18px;font-size:32px;line-height:32px;">Recognize by Mount Ang</div>
</div></div>
<div class="t" style="left:2288px;top:912.68px;font-size:32px;line-height:32px;">No</div>
<div style="left:2647.7px;top:903.88px;width:43.3px;height:49.5px;background:#f0f0f0;border-style:solid;border-width:2px 2.5px 2.5px 2px;border-color:#fff #a0a0a0 #a0a0a0 #fff;box-sizing:border-box"></div>
<svg style="left:2659.8px;top:924.38px" width="19" height="11" viewBox="0 0 19 11"><polygon points="0,0 19,0 9.5,11" fill="#000"/></svg>
<div style="left:1876px;top:968.8px;width:25px;height:24.5px;border:2.5px solid #000;background:#fff;box-sizing:border-box"></div>
<div style="left:1881.5px;top:979.8px;width:14px;height:2.5px;background:#000"></div>
<div class="t" style="left:1914px;top:964.68px;font-size:32.5px;line-height:32.5px;color:#6d6d6d;font-weight:bold;">Gap</div>
<div style="left:1907.5px;top:1008.72px;width:372.5px;height:49.5px;background:#fff"></div>
<div style="left:2282px;top:1008.72px;width:409px;height:49.5px;background:#fff"></div>
<div style="left:1907.5px;top:1008.72px;width:371.5px;height:49.5px;overflow:hidden">
<div style="left:-1907.5px;top:-1008.72px;width:3755px;height:2065px">
<div class="t" style="left:1913.5px;top:1017.02px;font-size:32px;line-height:32px;">Pickup Gap</div>
</div></div>
<div class="t" style="left:2288px;top:1017.52px;font-size:32px;line-height:32px;">0.1</div>
<div style="left:1907.5px;top:1061.14px;width:372.5px;height:49.5px;background:#fff"></div>
<div style="left:2282px;top:1061.14px;width:409px;height:49.5px;background:#fff"></div>
<div style="left:1907.5px;top:1061.14px;width:371.5px;height:49.5px;overflow:hidden">
<div style="left:-1907.5px;top:-1061.14px;width:3755px;height:2065px">
<div class="t" style="left:1913.5px;top:1069.44px;font-size:32px;line-height:32px;">Mount Gap</div>
</div></div>
<div class="t" style="left:2288px;top:1069.94px;font-size:32px;line-height:32px;">0</div>
<div style="left:1907.5px;top:1113.56px;width:372.5px;height:49.5px;background:#fff"></div>
<div style="left:2282px;top:1113.56px;width:409px;height:49.5px;background:#fff"></div>
<div style="left:1907.5px;top:1113.56px;width:371.5px;height:49.5px;overflow:hidden">
<div style="left:-1907.5px;top:-1113.56px;width:3755px;height:2065px">
<div class="t" style="left:1913.5px;top:1121.86px;font-size:32px;line-height:32px;">Automatic Height Measur</div>
</div></div>
<div class="t" style="left:2288px;top:1122.36px;font-size:32px;line-height:32px;">No</div>
<div style="left:2647.7px;top:1113.56px;width:43.3px;height:49.5px;background:#f0f0f0;border-style:solid;border-width:2px 2.5px 2.5px 2px;border-color:#fff #a0a0a0 #a0a0a0 #fff;box-sizing:border-box"></div>
<svg style="left:2659.8px;top:1134.06px" width="19" height="11" viewBox="0 0 19 11"><polygon points="0,0 19,0 9.5,11" fill="#000"/></svg>
<div style="left:1907.5px;top:1165.98px;width:372.5px;height:49.5px;background:#fff"></div>
<div style="left:2282px;top:1165.98px;width:409px;height:49.5px;background:#fff"></div>
<div style="left:1907.5px;top:1165.98px;width:371.5px;height:49.5px;overflow:hidden">
<div style="left:-1907.5px;top:-1165.98px;width:3755px;height:2065px">
<div class="t" style="left:1913.5px;top:1174.28px;font-size:32px;line-height:32px;">Automatic Height Measur</div>
</div></div>
<div class="t" style="left:2288px;top:1174.78px;font-size:32px;line-height:32px;">No</div>
<div style="left:2647.7px;top:1165.98px;width:43.3px;height:49.5px;background:#f0f0f0;border-style:solid;border-width:2px 2.5px 2.5px 2px;border-color:#fff #a0a0a0 #a0a0a0 #fff;box-sizing:border-box"></div>
<svg style="left:2659.8px;top:1186.48px" width="19" height="11" viewBox="0 0 19 11"><polygon points="0,0 19,0 9.5,11" fill="#000"/></svg>
<div style="left:1907.5px;top:1218.4px;width:372.5px;height:49.5px;background:#fff"></div>
<div style="left:2282px;top:1218.4px;width:409px;height:49.5px;background:#fff"></div>
<div style="left:1907.5px;top:1218.4px;width:371.5px;height:49.5px;overflow:hidden">
<div style="left:-1907.5px;top:-1218.4px;width:3755px;height:2065px">
<div class="t" style="left:1913.5px;top:1226.7px;font-size:32px;line-height:32px;">Auto Height Measure(Hei</div>
</div></div>
<div class="t" style="left:2288px;top:1227.2px;font-size:32px;line-height:32px;">No</div>
<div style="left:2647.7px;top:1218.4px;width:43.3px;height:49.5px;background:#f0f0f0;border-style:solid;border-width:2px 2.5px 2.5px 2px;border-color:#fff #a0a0a0 #a0a0a0 #fff;box-sizing:border-box"></div>
<svg style="left:2659.8px;top:1238.9px" width="19" height="11" viewBox="0 0 19 11"><polygon points="0,0 19,0 9.5,11" fill="#000"/></svg>
<div style="left:1907.5px;top:1270.82px;width:372.5px;height:49.5px;background:#fff"></div>
<div style="left:2282px;top:1270.82px;width:409px;height:49.5px;background:#fff"></div>
<div style="left:1907.5px;top:1270.82px;width:371.5px;height:49.5px;overflow:hidden">
<div style="left:-1907.5px;top:-1270.82px;width:3755px;height:2065px">
<div class="t" style="left:1913.5px;top:1279.12px;font-size:32px;line-height:32px;">Height Measure Gap</div>
</div></div>
<div class="t" style="left:2288px;top:1279.62px;font-size:32px;line-height:32px;">0</div>
<div style="left:1907.5px;top:1323.24px;width:372.5px;height:49.5px;background:#fff"></div>
<div style="left:2282px;top:1323.24px;width:409px;height:49.5px;background:#fff"></div>
<div style="left:1907.5px;top:1323.24px;width:371.5px;height:49.5px;overflow:hidden">
<div style="left:-1907.5px;top:-1323.24px;width:3755px;height:2065px">
<div class="t" style="left:1913.5px;top:1331.54px;font-size:32px;line-height:32px;">3D Mount Gap</div>
</div></div>
<div class="t" style="left:2288px;top:1332.04px;font-size:32px;line-height:32px;">0</div>
<div style="left:1876px;top:1388.16px;width:25px;height:24.5px;border:2.5px solid #000;background:#fff;box-sizing:border-box"></div>
<div style="left:1881.5px;top:1399.16px;width:14px;height:2.5px;background:#000"></div>
<div class="t" style="left:1914px;top:1384.04px;font-size:32.5px;line-height:32.5px;color:#6d6d6d;font-weight:bold;">Pickup</div>
<div style="left:1907.5px;top:1428.08px;width:372.5px;height:49.5px;background:#fff"></div>
<div style="left:2282px;top:1428.08px;width:409px;height:49.5px;background:#fff"></div>
<div style="left:1907.5px;top:1428.08px;width:371.5px;height:49.5px;overflow:hidden">
<div style="left:-1907.5px;top:-1428.08px;width:3755px;height:2065px">
<div class="t" style="left:1913.5px;top:1436.38px;font-size:32px;line-height:32px;">Pickup Offset X</div>
</div></div>
<div class="t" style="left:2288px;top:1436.88px;font-size:32px;line-height:32px;">0</div>
<div style="left:1907.5px;top:1480.5px;width:372.5px;height:49.5px;background:#fff"></div>
<div style="left:2282px;top:1480.5px;width:409px;height:49.5px;background:#fff"></div>
<div style="left:1907.5px;top:1480.5px;width:371.5px;height:49.5px;overflow:hidden">
<div style="left:-1907.5px;top:-1480.5px;width:3755px;height:2065px">
<div class="t" style="left:1913.5px;top:1488.8px;font-size:32px;line-height:32px;">Pickup Offset Y</div>
</div></div>
<div class="t" style="left:2288px;top:1489.3px;font-size:32px;line-height:32px;">0</div>
<div style="left:1907.5px;top:1532.92px;width:372.5px;height:49.5px;background:#fff"></div>
<div style="left:2282px;top:1532.92px;width:409px;height:49.5px;background:#fff"></div>
<div style="left:1907.5px;top:1532.92px;width:371.5px;height:49.5px;overflow:hidden">
<div style="left:-1907.5px;top:-1532.92px;width:3755px;height:2065px">
<div class="t" style="left:1913.5px;top:1541.22px;font-size:32px;line-height:32px;">Pickup Angle</div>
</div></div>
<div class="t" style="left:2288px;top:1541.72px;font-size:32px;line-height:32px;">0</div>
<div style="left:1907.5px;top:1585.34px;width:372.5px;height:49.5px;background:#fff"></div>
<div style="left:2282px;top:1585.34px;width:409px;height:49.5px;background:#fff"></div>
<div style="left:1907.5px;top:1585.34px;width:371.5px;height:49.5px;overflow:hidden">
<div style="left:-1907.5px;top:-1585.34px;width:3755px;height:2065px">
<div class="t" style="left:1913.5px;top:1593.64px;font-size:32px;line-height:32px;">Gang Pickup</div>
</div></div>
<div class="t" style="left:2288px;top:1594.14px;font-size:32px;line-height:32px;">Not Allow</div>
<div style="left:2647.7px;top:1585.34px;width:43.3px;height:49.5px;background:#f0f0f0;border-style:solid;border-width:2px 2.5px 2.5px 2px;border-color:#fff #a0a0a0 #a0a0a0 #fff;box-sizing:border-box"></div>
<svg style="left:2659.8px;top:1605.84px" width="19" height="11" viewBox="0 0 19 11"><polygon points="0,0 19,0 9.5,11" fill="#000"/></svg>
<div style="left:1907.5px;top:1637.76px;width:372.5px;height:49.5px;background:#fff"></div>
<div style="left:2282px;top:1637.76px;width:409px;height:49.5px;background:#fff"></div>
<div style="left:1907.5px;top:1637.76px;width:371.5px;height:49.5px;overflow:hidden">
<div style="left:-1907.5px;top:-1637.76px;width:3755px;height:2065px">
<div class="t" style="left:1913.5px;top:1646.06px;font-size:32px;line-height:32px;">Pickup Position Learning</div>
</div></div>
<div class="t" style="left:2288px;top:1646.56px;font-size:32px;line-height:32px;">Yes</div>
<div style="left:2647.7px;top:1637.76px;width:43.3px;height:49.5px;background:#f0f0f0;border-style:solid;border-width:2px 2.5px 2.5px 2px;border-color:#fff #a0a0a0 #a0a0a0 #fff;box-sizing:border-box"></div>
<svg style="left:2659.8px;top:1658.26px" width="19" height="11" viewBox="0 0 19 11"><polygon points="0,0 19,0 9.5,11" fill="#000"/></svg>
<div style="left:1907.5px;top:1690.18px;width:372.5px;height:49.5px;background:#fff"></div>
<div style="left:2282px;top:1690.18px;width:409px;height:49.5px;background:#fff"></div>
<div style="left:1907.5px;top:1690.18px;width:371.5px;height:49.5px;overflow:hidden">
<div style="left:-1907.5px;top:-1690.18px;width:3755px;height:2065px">
<div class="t" style="left:1913.5px;top:1698.48px;font-size:32px;line-height:32px;">Pickup Shift Tolerance</div>
</div></div>
<div class="t" style="left:2288px;top:1698.98px;font-size:32px;line-height:32px;">0</div>
<div style="left:1907.5px;top:1742.6px;width:372.5px;height:49.5px;background:#fff"></div>
<div style="left:2282px;top:1742.6px;width:409px;height:49.5px;background:#fff"></div>
<div style="left:1907.5px;top:1742.6px;width:371.5px;height:49.5px;overflow:hidden">
<div style="left:-1907.5px;top:-1742.6px;width:3755px;height:2065px">
<div class="t" style="left:1913.5px;top:1750.9px;font-size:32px;line-height:32px;">Pickup before Inspection</div>
</div></div>
<div class="t" style="left:2288px;top:1751.4px;font-size:32px;line-height:32px;">Yes</div>
<div style="left:2647.7px;top:1742.6px;width:43.3px;height:49.5px;background:#f0f0f0;border-style:solid;border-width:2px 2.5px 2.5px 2px;border-color:#fff #a0a0a0 #a0a0a0 #fff;box-sizing:border-box"></div>
<svg style="left:2659.8px;top:1763.1px" width="19" height="11" viewBox="0 0 19 11"><polygon points="0,0 19,0 9.5,11" fill="#000"/></svg>
<div style="left:1907.5px;top:1795.02px;width:372.5px;height:49.5px;background:#fff"></div>
<div style="left:2282px;top:1795.02px;width:409px;height:49.5px;background:#fff"></div>
<div style="left:1907.5px;top:1795.02px;width:371.5px;height:49.5px;overflow:hidden">
<div style="left:-1907.5px;top:-1795.02px;width:3755px;height:2065px">
<div class="t" style="left:1913.5px;top:1803.32px;font-size:32px;line-height:32px;">Mount Load</div>
</div></div>
<div class="t" style="left:2288px;top:1803.82px;font-size:32px;line-height:32px;">2.5</div>
<div style="left:1907.5px;top:1847.44px;width:372.5px;height:49.5px;background:#fff"></div>
<div style="left:2282px;top:1847.44px;width:409px;height:49.5px;background:#fff"></div>
<div style="left:1907.5px;top:1847.44px;width:371.5px;height:49.5px;overflow:hidden">
<div style="left:-1907.5px;top:-1847.44px;width:3755px;height:2065px">
<div class="t" style="left:1913.5px;top:1855.74px;font-size:32px;line-height:32px;">Mount Motion(Down)</div>
</div></div>
<div class="t" style="left:2288px;top:1856.24px;font-size:32px;line-height:32px;">1 step</div>
<div style="left:2647.7px;top:1847.44px;width:43.3px;height:49.5px;background:#f0f0f0;border-style:solid;border-width:2px 2.5px 2.5px 2px;border-color:#fff #a0a0a0 #a0a0a0 #fff;box-sizing:border-box"></div>
<svg style="left:2659.8px;top:1867.94px" width="19" height="11" viewBox="0 0 19 11"><polygon points="0,0 19,0 9.5,11" fill="#000"/></svg>
<div style="left:1907.5px;top:1899.86px;width:372.5px;height:49.5px;background:#fff"></div>
<div style="left:2282px;top:1899.86px;width:409px;height:49.5px;background:#fff"></div>
<div style="left:1907.5px;top:1899.86px;width:371.5px;height:49.5px;overflow:hidden">
<div style="left:-1907.5px;top:-1899.86px;width:3755px;height:2065px">
<div class="t" style="left:1913.5px;top:1908.16px;font-size:32px;line-height:32px;">2 Step Motion HeightOffs</div>
</div></div>
<div class="t" style="left:2288px;top:1908.66px;font-size:32px;line-height:32px;">0</div>
<div style="left:1907.5px;top:1952.28px;width:372.5px;height:49.5px;background:#fff"></div>
<div style="left:2282px;top:1952.28px;width:409px;height:49.5px;background:#fff"></div>
<div style="left:1907.5px;top:1952.28px;width:371.5px;height:49.5px;overflow:hidden">
<div style="left:-1907.5px;top:-1952.28px;width:3755px;height:2065px">
<div class="t" style="left:1913.5px;top:1960.58px;font-size:32px;line-height:32px;">Mount Motion Hold(Up)</div>
</div></div>
<div class="t" style="left:2288px;top:1961.08px;font-size:32px;line-height:32px;">Standard</div>
<div style="left:2647.7px;top:1952.28px;width:43.3px;height:49.5px;background:#f0f0f0;border-style:solid;border-width:2px 2.5px 2.5px 2px;border-color:#fff #a0a0a0 #a0a0a0 #fff;box-sizing:border-box"></div>
<svg style="left:2659.8px;top:1972.78px" width="19" height="11" viewBox="0 0 19 11"><polygon points="0,0 19,0 9.5,11" fill="#000"/></svg>
</div></div>
<div style="left:1868px;top:169px;width:4px;height:1796px;background:#8a8a8a"></div>
<div style="left:2694.5px;top:169px;width:44.5px;height:1796px;background:#f5f5f5"></div>
<div style="left:2694.5px;top:171px;width:44px;height:44px;background:#f0f0f0;border-style:solid;border-width:3px 3px 3px 3px;border-color:#fff #696969 #696969 #fff;box-sizing:border-box;box-shadow:inset 2px 2px 0 #e3e3e3, inset -2.5px -2.5px 0 #a0a0a0"></div>
<svg style="left:2707px;top:185.7px" width="19" height="11" viewBox="0 0 19 11"><polygon points="0,11 19,11 9.5,0" fill="#000"/></svg>
<div style="left:2694.5px;top:215px;width:44px;height:757px;background:#f0f0f0;border-style:solid;border-width:3px 3px 3px 3px;border-color:#fff #696969 #696969 #fff;box-sizing:border-box;box-shadow:inset 2px 2px 0 #e3e3e3, inset -2.5px -2.5px 0 #a0a0a0"></div>
<div style="left:2738.5px;top:169px;width:3.5px;height:1796px;background:#a0a0a0"></div>
<div style="left:2788.6px;top:167px;width:940.9px;height:1798px;background:#000"></div>
<div class="t" style="left:2790px;top:171.32px;font-size:35.5px;line-height:35.5px;color:#fff;font-weight:bold;">3D View</div>
<div style="left:2802px;top:704px;width:914.5px;height:724px;background:#555555"></div>
<svg style="left:3209px;top:1016px" width="100" height="100" viewBox="0 0 100 100">
<path d="M50,5.6 L50,95" stroke="#ff0000" stroke-width="8.5"/>
<path d="M6.5,51 L93.5,51" stroke="#ff0000" stroke-width="6"/>
<polygon points="27.5,51 42,35.5 58,35.5 72.5,51 58,65.5 42,65.5" fill="none" stroke="#fff" stroke-width="2.8"/>
<path d="M27.5,51 L72.5,51" stroke="#fff" stroke-width="6"/>
<path d="M50,30 L50,71" stroke="#fff" stroke-width="3"/>
</svg>
<svg style="left:2827px;top:1351px" width="40" height="40" viewBox="0 0 40 40"><circle cx="19.5" cy="19.5" r="18.6" fill="#fff"/></svg>
<div style="left:2788.6px;top:167px;width:940.9px;height:1798px;overflow:hidden">
<div style="left:-2788.6px;top:-167px;width:3755px;height:2065px">
<div class="t" style="left:2799.7px;top:1926.4px;font-size:36px;line-height:36px;color:#fff;font-weight:bold;letter-spacing:0.35px;white-space:pre;">Part Size : ( X=1.500, Y=1.900 )   Overall Size : ( X=1.500, Y=1.900 )</div>
</div></div>
<div style="left:2788.6px;top:1981.6px;width:463.4px;height:58.4px;background:#f0f0f0;border-style:solid;border-width:3px 3px 3px 3px;border-color:#fff #696969 #696969 #fff;box-sizing:border-box;box-shadow:inset 2px 2px 0 #e3e3e3, inset -2.5px -2.5px 0 #a0a0a0"></div>
<div class="t s" style="left:2788.6px;top:1995.35px;font-size:29px;line-height:29px;letter-spacing:-0.5px;width:463.4px;text-align:center;">OK</div>
<div style="left:3265.4px;top:1981.6px;width:464px;height:58.4px;background:#f0f0f0;border-style:solid;border-width:3px 3px 3px 3px;border-color:#fff #696969 #696969 #fff;box-sizing:border-box;box-shadow:inset 2px 2px 0 #e3e3e3, inset -2.5px -2.5px 0 #a0a0a0"></div>
<div class="t s" style="left:3265.4px;top:1995.35px;font-size:29px;line-height:29px;letter-spacing:-0.5px;width:464px;text-align:center;">Cancel</div>
<div style="left:0px;top:87.5px;width:2743px;height:81.5px;border:7px solid #ff0000;box-sizing:border-box"></div></body></html>
